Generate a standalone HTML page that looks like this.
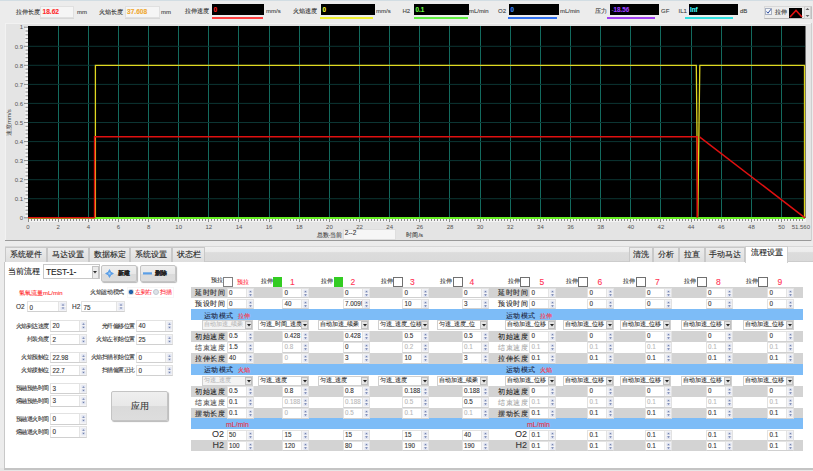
<!DOCTYPE html><html><head><meta charset="utf-8"><style>
*{margin:0;padding:0;box-sizing:border-box}
html,body{width:813px;height:471px;overflow:hidden;background:#ececec;font-family:"Liberation Sans", sans-serif;}
.a{position:absolute;white-space:nowrap}
.t{position:absolute;white-space:nowrap;font-size:7px;color:#333;line-height:1;-webkit-text-stroke:0.1px currentColor}
.bk{position:absolute;background:#000;}
.ul{position:absolute;height:2px}
.sp{position:absolute;background:#fff;border:1px solid #e2e2e2;border-bottom-color:#d0d0d0}
.sp .v{position:absolute;left:1.5px;top:1px;font-size:7px;color:#222;line-height:1;-webkit-text-stroke:0.1px currentColor}
.sp .ar{position:absolute;right:0;top:0;bottom:0;width:6px;border-left:1px solid #e4e4e4;background:#f4f4f6}
</style></head><body>

<div class="a" style="left:0;top:0;width:813px;height:1px;background:#d2dde3"></div>
<div class="t" style="left:16px;top:9px;font-size:6px;color:#333;">拉伸长度</div>
<div class="a" style="left:39.5px;top:6.3px;width:34.5px;height:11.7px;background:#f5f5f5;border:1px solid #e0e0e0;box-shadow:0 1px 0 #d8d8d8"></div>
<div class="t" style="left:42.5px;top:9.3px;font-size:6.6px;color:#ff2a2a;font-weight:bold">18.62</div>
<div class="t" style="left:77px;top:8.5px;font-size:6px;color:#444;">mm</div>
<div class="t" style="left:98.5px;top:9px;font-size:6px;color:#333;">火焰长度</div>
<div class="a" style="left:124.5px;top:6.3px;width:35px;height:11.7px;background:#f5f5f5;border:1px solid #e0e0e0;box-shadow:0 1px 0 #d8d8d8"></div>
<div class="t" style="left:127px;top:9.3px;font-size:6.6px;color:#f0a830;font-weight:bold">37.608</div>
<div class="t" style="left:161px;top:8.5px;font-size:6px;color:#444;">mm</div>
<div class="t" style="left:185px;top:8px;font-size:6px;color:#333;">拉伸速度</div>
<div class="bk" style="left:212px;top:4px;width:52px;height:11px"></div>
<div class="t" style="left:213.5px;top:6.6px;font-size:6.3px;color:#ff2020;font-weight:bold">0</div>
<div class="ul" style="left:212px;top:16.6px;width:51px;background:#ff4040"></div>
<div class="t" style="left:266px;top:8px;font-size:6px;color:#444;">mm/s</div>
<div class="t" style="left:293px;top:8px;font-size:6px;color:#333;">火焰速度</div>
<div class="bk" style="left:321px;top:4px;width:54px;height:11px"></div>
<div class="t" style="left:322.5px;top:6.6px;font-size:6.3px;color:#ffff30;font-weight:bold">0</div>
<div class="ul" style="left:320px;top:16.6px;width:53px;background:#f0f030"></div>
<div class="t" style="left:376px;top:8px;font-size:6px;color:#444;">mm/s</div>
<div class="t" style="left:402.5px;top:8px;font-size:6px;color:#444;">H2</div>
<div class="bk" style="left:414px;top:4px;width:55px;height:11px"></div>
<div class="t" style="left:415.5px;top:6.6px;font-size:6.3px;color:#70ff40;font-weight:bold">0.1</div>
<div class="ul" style="left:414px;top:16.6px;width:54px;background:#60f040"></div>
<div class="t" style="left:469px;top:8.3px;font-size:6px;color:#444;">mL/min</div>
<div class="t" style="left:498px;top:8px;font-size:6px;color:#444;">O2</div>
<div class="bk" style="left:509px;top:4px;width:50px;height:11px"></div>
<div class="t" style="left:510.5px;top:6.6px;font-size:6.3px;color:#3a8cff;font-weight:bold">0</div>
<div class="ul" style="left:507.5px;top:16.6px;width:49px;background:#3070f0"></div>
<div class="t" style="left:560px;top:8.3px;font-size:6px;color:#444;">mL/min</div>
<div class="t" style="left:594.5px;top:8px;font-size:6px;color:#444;">压力</div>
<div class="bk" style="left:610px;top:4px;width:49px;height:11px"></div>
<div class="t" style="left:611.5px;top:6.6px;font-size:6.3px;color:#a040ff;font-weight:bold"><span style="font-weight:normal;color:#8060a0">-</span>18.56</div>
<div class="ul" style="left:606.5px;top:16.6px;width:48px;background:#a040f0"></div>
<div class="t" style="left:661px;top:8.3px;font-size:6px;color:#444;">GF</div>
<div class="t" style="left:678.5px;top:8px;font-size:6px;color:#444;">IL1</div>
<div class="bk" style="left:688.5px;top:4px;width:49.5px;height:11px"></div>
<div class="t" style="left:690.0px;top:6.6px;font-size:6.3px;color:#40ffff;font-weight:bold">Inf</div>
<div class="ul" style="left:684.5px;top:16.6px;width:48.5px;background:#30e0e0"></div>
<div class="t" style="left:740px;top:8.3px;font-size:6px;color:#444;">dB</div>
<div class="a" style="left:763.5px;top:5.5px;width:48px;height:13.5px;background:#ececec;border:1px solid #d8d8d8;border-bottom-color:#b8b8b8;border-right-color:#c0c0c0"></div>
<div class="a" style="left:765px;top:8px;width:6.5px;height:6.5px;background:#f4f6fa;border:1px solid #a8b0c0"></div>
<svg class="a" style="left:765px;top:8px" width="7" height="7"><polyline points="1.5,3.5 3,5.2 6,1.2" fill="none" stroke="#3050a0" stroke-width="1"/></svg>
<div class="t" style="left:774.5px;top:8.5px;font-size:6px;color:#333;">拉伸</div>
<div class="a" style="left:788.6px;top:7.5px;width:13.4px;height:10px;background:#000"></div>
<svg class="a" style="left:788.6px;top:7.5px" width="14" height="10"><polyline points="1,9 7,2.5 13,9" fill="none" stroke="#e01010" stroke-width="1.6"/></svg>
<div class="a" style="left:804px;top:6px;width:7px;height:12.5px;background:#e8e8e8;border:1px solid #d0d0d0"></div>
<svg class="a" style="left:805px;top:7px" width="5" height="11"><polygon points="0.5,3 4.5,3 2.5,1" fill="#666"/><polygon points="0.5,8 4.5,8 2.5,10" fill="#666"/></svg>
<svg class="a" style="left:0;top:0" width="813" height="245"><rect x="5.5" y="23.5" width="806" height="217" fill="#e4e4e4" stroke="#f2f2f2"/><rect x="25" y="26" width="3" height="192" fill="#f2f2f2"/><rect x="28" y="219" width="778" height="3" fill="#f2f2f2"/><line x1="5" y1="240.5" x2="812" y2="240.5" stroke="#9a9a9a"/><line x1="811.5" y1="23" x2="811.5" y2="241" stroke="#cfcfcf"/><rect x="28" y="26" width="777.5" height="192" fill="#000"/><line x1="58.5" y1="26" x2="58.5" y2="217.8" stroke="#136a5e" stroke-width="1"/><line x1="88.5" y1="26" x2="88.5" y2="217.8" stroke="#136a5e" stroke-width="1"/><line x1="118.5" y1="26" x2="118.5" y2="217.8" stroke="#136a5e" stroke-width="1"/><line x1="148.5" y1="26" x2="148.5" y2="217.8" stroke="#136a5e" stroke-width="1"/><line x1="178.5" y1="26" x2="178.5" y2="217.8" stroke="#136a5e" stroke-width="1"/><line x1="208.5" y1="26" x2="208.5" y2="217.8" stroke="#136a5e" stroke-width="1"/><line x1="238.5" y1="26" x2="238.5" y2="217.8" stroke="#136a5e" stroke-width="1"/><line x1="269.5" y1="26" x2="269.5" y2="217.8" stroke="#136a5e" stroke-width="1"/><line x1="299.5" y1="26" x2="299.5" y2="217.8" stroke="#136a5e" stroke-width="1"/><line x1="329.5" y1="26" x2="329.5" y2="217.8" stroke="#136a5e" stroke-width="1"/><line x1="359.5" y1="26" x2="359.5" y2="217.8" stroke="#136a5e" stroke-width="1"/><line x1="389.5" y1="26" x2="389.5" y2="217.8" stroke="#136a5e" stroke-width="1"/><line x1="419.5" y1="26" x2="419.5" y2="217.8" stroke="#136a5e" stroke-width="1"/><line x1="449.5" y1="26" x2="449.5" y2="217.8" stroke="#136a5e" stroke-width="1"/><line x1="480.5" y1="26" x2="480.5" y2="217.8" stroke="#136a5e" stroke-width="1"/><line x1="510.5" y1="26" x2="510.5" y2="217.8" stroke="#136a5e" stroke-width="1"/><line x1="540.5" y1="26" x2="540.5" y2="217.8" stroke="#136a5e" stroke-width="1"/><line x1="570.5" y1="26" x2="570.5" y2="217.8" stroke="#136a5e" stroke-width="1"/><line x1="600.5" y1="26" x2="600.5" y2="217.8" stroke="#136a5e" stroke-width="1"/><line x1="630.5" y1="26" x2="630.5" y2="217.8" stroke="#136a5e" stroke-width="1"/><line x1="660.5" y1="26" x2="660.5" y2="217.8" stroke="#136a5e" stroke-width="1"/><line x1="691.5" y1="26" x2="691.5" y2="217.8" stroke="#136a5e" stroke-width="1"/><line x1="721.5" y1="26" x2="721.5" y2="217.8" stroke="#136a5e" stroke-width="1"/><line x1="751.5" y1="26" x2="751.5" y2="217.8" stroke="#136a5e" stroke-width="1"/><line x1="781.5" y1="26" x2="781.5" y2="217.8" stroke="#136a5e" stroke-width="1"/><line x1="28" y1="198.7" x2="805.0" y2="198.7" stroke="#0c3533" stroke-width="1"/><line x1="28" y1="179.7" x2="805.0" y2="179.7" stroke="#0c3533" stroke-width="1"/><line x1="28" y1="160.6" x2="805.0" y2="160.6" stroke="#0c3533" stroke-width="1"/><line x1="28" y1="141.6" x2="805.0" y2="141.6" stroke="#0c3533" stroke-width="1"/><line x1="28" y1="122.5" x2="805.0" y2="122.5" stroke="#0c3533" stroke-width="1"/><line x1="28" y1="103.4" x2="805.0" y2="103.4" stroke="#0c3533" stroke-width="1"/><line x1="28" y1="84.4" x2="805.0" y2="84.4" stroke="#0c3533" stroke-width="1"/><line x1="28" y1="65.3" x2="805.0" y2="65.3" stroke="#0c3533" stroke-width="1"/><line x1="28" y1="46.3" x2="805.0" y2="46.3" stroke="#0c3533" stroke-width="1"/><line x1="28" y1="218" x2="805.0" y2="218" stroke="#66ee22" stroke-width="2"/><line x1="28" y1="217.7" x2="94.6" y2="217.7" stroke="#e01010" stroke-width="1.6"/><polyline points="95.4,217.8 95.4,65.3 696.3,65.3 697.8,216.8 699.8,65.3 804.5,65.3 804.5,217.8" fill="none" stroke="#e0d820" stroke-width="1.3"/><polyline points="94.6,217.8 94.6,136.8 697.2,136.8 697.2,217.8" fill="none" stroke="#e01010" stroke-width="1.5"/><line x1="699.5" y1="136.8" x2="805.0" y2="217.8" stroke="#e01010" stroke-width="1.5"/><line x1="28.5" y1="219" x2="28.5" y2="222" stroke="#888" stroke-width="1"/><line x1="31.5" y1="219" x2="31.5" y2="221" stroke="#888" stroke-width="1"/><line x1="34.5" y1="219" x2="34.5" y2="221" stroke="#888" stroke-width="1"/><line x1="37.5" y1="219" x2="37.5" y2="221" stroke="#888" stroke-width="1"/><line x1="40.5" y1="219" x2="40.5" y2="221" stroke="#888" stroke-width="1"/><line x1="43.5" y1="219" x2="43.5" y2="221" stroke="#888" stroke-width="1"/><line x1="46.5" y1="219" x2="46.5" y2="221" stroke="#888" stroke-width="1"/><line x1="49.5" y1="219" x2="49.5" y2="221" stroke="#888" stroke-width="1"/><line x1="52.5" y1="219" x2="52.5" y2="221" stroke="#888" stroke-width="1"/><line x1="55.5" y1="219" x2="55.5" y2="221" stroke="#888" stroke-width="1"/><line x1="58.5" y1="219" x2="58.5" y2="222" stroke="#888" stroke-width="1"/><line x1="61.5" y1="219" x2="61.5" y2="221" stroke="#888" stroke-width="1"/><line x1="64.5" y1="219" x2="64.5" y2="221" stroke="#888" stroke-width="1"/><line x1="67.5" y1="219" x2="67.5" y2="221" stroke="#888" stroke-width="1"/><line x1="70.5" y1="219" x2="70.5" y2="221" stroke="#888" stroke-width="1"/><line x1="73.5" y1="219" x2="73.5" y2="221" stroke="#888" stroke-width="1"/><line x1="76.5" y1="219" x2="76.5" y2="221" stroke="#888" stroke-width="1"/><line x1="79.5" y1="219" x2="79.5" y2="221" stroke="#888" stroke-width="1"/><line x1="82.5" y1="219" x2="82.5" y2="221" stroke="#888" stroke-width="1"/><line x1="85.5" y1="219" x2="85.5" y2="221" stroke="#888" stroke-width="1"/><line x1="88.5" y1="219" x2="88.5" y2="222" stroke="#888" stroke-width="1"/><line x1="91.5" y1="219" x2="91.5" y2="221" stroke="#888" stroke-width="1"/><line x1="94.5" y1="219" x2="94.5" y2="221" stroke="#888" stroke-width="1"/><line x1="97.5" y1="219" x2="97.5" y2="221" stroke="#888" stroke-width="1"/><line x1="100.5" y1="219" x2="100.5" y2="221" stroke="#888" stroke-width="1"/><line x1="103.5" y1="219" x2="103.5" y2="221" stroke="#888" stroke-width="1"/><line x1="106.5" y1="219" x2="106.5" y2="221" stroke="#888" stroke-width="1"/><line x1="109.5" y1="219" x2="109.5" y2="221" stroke="#888" stroke-width="1"/><line x1="112.5" y1="219" x2="112.5" y2="221" stroke="#888" stroke-width="1"/><line x1="115.5" y1="219" x2="115.5" y2="221" stroke="#888" stroke-width="1"/><line x1="118.5" y1="219" x2="118.5" y2="222" stroke="#888" stroke-width="1"/><line x1="121.5" y1="219" x2="121.5" y2="221" stroke="#888" stroke-width="1"/><line x1="124.5" y1="219" x2="124.5" y2="221" stroke="#888" stroke-width="1"/><line x1="127.5" y1="219" x2="127.5" y2="221" stroke="#888" stroke-width="1"/><line x1="130.5" y1="219" x2="130.5" y2="221" stroke="#888" stroke-width="1"/><line x1="133.5" y1="219" x2="133.5" y2="221" stroke="#888" stroke-width="1"/><line x1="136.5" y1="219" x2="136.5" y2="221" stroke="#888" stroke-width="1"/><line x1="139.5" y1="219" x2="139.5" y2="221" stroke="#888" stroke-width="1"/><line x1="142.5" y1="219" x2="142.5" y2="221" stroke="#888" stroke-width="1"/><line x1="145.5" y1="219" x2="145.5" y2="221" stroke="#888" stroke-width="1"/><line x1="148.5" y1="219" x2="148.5" y2="222" stroke="#888" stroke-width="1"/><line x1="151.5" y1="219" x2="151.5" y2="221" stroke="#888" stroke-width="1"/><line x1="154.5" y1="219" x2="154.5" y2="221" stroke="#888" stroke-width="1"/><line x1="157.5" y1="219" x2="157.5" y2="221" stroke="#888" stroke-width="1"/><line x1="160.5" y1="219" x2="160.5" y2="221" stroke="#888" stroke-width="1"/><line x1="163.5" y1="219" x2="163.5" y2="221" stroke="#888" stroke-width="1"/><line x1="166.5" y1="219" x2="166.5" y2="221" stroke="#888" stroke-width="1"/><line x1="169.5" y1="219" x2="169.5" y2="221" stroke="#888" stroke-width="1"/><line x1="172.5" y1="219" x2="172.5" y2="221" stroke="#888" stroke-width="1"/><line x1="175.5" y1="219" x2="175.5" y2="221" stroke="#888" stroke-width="1"/><line x1="178.5" y1="219" x2="178.5" y2="222" stroke="#888" stroke-width="1"/><line x1="181.5" y1="219" x2="181.5" y2="221" stroke="#888" stroke-width="1"/><line x1="184.5" y1="219" x2="184.5" y2="221" stroke="#888" stroke-width="1"/><line x1="187.5" y1="219" x2="187.5" y2="221" stroke="#888" stroke-width="1"/><line x1="190.5" y1="219" x2="190.5" y2="221" stroke="#888" stroke-width="1"/><line x1="193.5" y1="219" x2="193.5" y2="221" stroke="#888" stroke-width="1"/><line x1="196.5" y1="219" x2="196.5" y2="221" stroke="#888" stroke-width="1"/><line x1="199.5" y1="219" x2="199.5" y2="221" stroke="#888" stroke-width="1"/><line x1="202.5" y1="219" x2="202.5" y2="221" stroke="#888" stroke-width="1"/><line x1="205.5" y1="219" x2="205.5" y2="221" stroke="#888" stroke-width="1"/><line x1="208.5" y1="219" x2="208.5" y2="222" stroke="#888" stroke-width="1"/><line x1="211.5" y1="219" x2="211.5" y2="221" stroke="#888" stroke-width="1"/><line x1="214.5" y1="219" x2="214.5" y2="221" stroke="#888" stroke-width="1"/><line x1="217.5" y1="219" x2="217.5" y2="221" stroke="#888" stroke-width="1"/><line x1="220.5" y1="219" x2="220.5" y2="221" stroke="#888" stroke-width="1"/><line x1="223.5" y1="219" x2="223.5" y2="221" stroke="#888" stroke-width="1"/><line x1="226.5" y1="219" x2="226.5" y2="221" stroke="#888" stroke-width="1"/><line x1="229.5" y1="219" x2="229.5" y2="221" stroke="#888" stroke-width="1"/><line x1="232.5" y1="219" x2="232.5" y2="221" stroke="#888" stroke-width="1"/><line x1="235.5" y1="219" x2="235.5" y2="221" stroke="#888" stroke-width="1"/><line x1="238.5" y1="219" x2="238.5" y2="222" stroke="#888" stroke-width="1"/><line x1="241.5" y1="219" x2="241.5" y2="221" stroke="#888" stroke-width="1"/><line x1="245.5" y1="219" x2="245.5" y2="221" stroke="#888" stroke-width="1"/><line x1="248.5" y1="219" x2="248.5" y2="221" stroke="#888" stroke-width="1"/><line x1="251.5" y1="219" x2="251.5" y2="221" stroke="#888" stroke-width="1"/><line x1="254.5" y1="219" x2="254.5" y2="221" stroke="#888" stroke-width="1"/><line x1="257.5" y1="219" x2="257.5" y2="221" stroke="#888" stroke-width="1"/><line x1="260.5" y1="219" x2="260.5" y2="221" stroke="#888" stroke-width="1"/><line x1="263.5" y1="219" x2="263.5" y2="221" stroke="#888" stroke-width="1"/><line x1="266.5" y1="219" x2="266.5" y2="221" stroke="#888" stroke-width="1"/><line x1="269.5" y1="219" x2="269.5" y2="222" stroke="#888" stroke-width="1"/><line x1="272.5" y1="219" x2="272.5" y2="221" stroke="#888" stroke-width="1"/><line x1="275.5" y1="219" x2="275.5" y2="221" stroke="#888" stroke-width="1"/><line x1="278.5" y1="219" x2="278.5" y2="221" stroke="#888" stroke-width="1"/><line x1="281.5" y1="219" x2="281.5" y2="221" stroke="#888" stroke-width="1"/><line x1="284.5" y1="219" x2="284.5" y2="221" stroke="#888" stroke-width="1"/><line x1="287.5" y1="219" x2="287.5" y2="221" stroke="#888" stroke-width="1"/><line x1="290.5" y1="219" x2="290.5" y2="221" stroke="#888" stroke-width="1"/><line x1="293.5" y1="219" x2="293.5" y2="221" stroke="#888" stroke-width="1"/><line x1="296.5" y1="219" x2="296.5" y2="221" stroke="#888" stroke-width="1"/><line x1="299.5" y1="219" x2="299.5" y2="222" stroke="#888" stroke-width="1"/><line x1="302.5" y1="219" x2="302.5" y2="221" stroke="#888" stroke-width="1"/><line x1="305.5" y1="219" x2="305.5" y2="221" stroke="#888" stroke-width="1"/><line x1="308.5" y1="219" x2="308.5" y2="221" stroke="#888" stroke-width="1"/><line x1="311.5" y1="219" x2="311.5" y2="221" stroke="#888" stroke-width="1"/><line x1="314.5" y1="219" x2="314.5" y2="221" stroke="#888" stroke-width="1"/><line x1="317.5" y1="219" x2="317.5" y2="221" stroke="#888" stroke-width="1"/><line x1="320.5" y1="219" x2="320.5" y2="221" stroke="#888" stroke-width="1"/><line x1="323.5" y1="219" x2="323.5" y2="221" stroke="#888" stroke-width="1"/><line x1="326.5" y1="219" x2="326.5" y2="221" stroke="#888" stroke-width="1"/><line x1="329.5" y1="219" x2="329.5" y2="222" stroke="#888" stroke-width="1"/><line x1="332.5" y1="219" x2="332.5" y2="221" stroke="#888" stroke-width="1"/><line x1="335.5" y1="219" x2="335.5" y2="221" stroke="#888" stroke-width="1"/><line x1="338.5" y1="219" x2="338.5" y2="221" stroke="#888" stroke-width="1"/><line x1="341.5" y1="219" x2="341.5" y2="221" stroke="#888" stroke-width="1"/><line x1="344.5" y1="219" x2="344.5" y2="221" stroke="#888" stroke-width="1"/><line x1="347.5" y1="219" x2="347.5" y2="221" stroke="#888" stroke-width="1"/><line x1="350.5" y1="219" x2="350.5" y2="221" stroke="#888" stroke-width="1"/><line x1="353.5" y1="219" x2="353.5" y2="221" stroke="#888" stroke-width="1"/><line x1="356.5" y1="219" x2="356.5" y2="221" stroke="#888" stroke-width="1"/><line x1="359.5" y1="219" x2="359.5" y2="222" stroke="#888" stroke-width="1"/><line x1="362.5" y1="219" x2="362.5" y2="221" stroke="#888" stroke-width="1"/><line x1="365.5" y1="219" x2="365.5" y2="221" stroke="#888" stroke-width="1"/><line x1="368.5" y1="219" x2="368.5" y2="221" stroke="#888" stroke-width="1"/><line x1="371.5" y1="219" x2="371.5" y2="221" stroke="#888" stroke-width="1"/><line x1="374.5" y1="219" x2="374.5" y2="221" stroke="#888" stroke-width="1"/><line x1="377.5" y1="219" x2="377.5" y2="221" stroke="#888" stroke-width="1"/><line x1="380.5" y1="219" x2="380.5" y2="221" stroke="#888" stroke-width="1"/><line x1="383.5" y1="219" x2="383.5" y2="221" stroke="#888" stroke-width="1"/><line x1="386.5" y1="219" x2="386.5" y2="221" stroke="#888" stroke-width="1"/><line x1="389.5" y1="219" x2="389.5" y2="222" stroke="#888" stroke-width="1"/><line x1="392.5" y1="219" x2="392.5" y2="221" stroke="#888" stroke-width="1"/><line x1="395.5" y1="219" x2="395.5" y2="221" stroke="#888" stroke-width="1"/><line x1="398.5" y1="219" x2="398.5" y2="221" stroke="#888" stroke-width="1"/><line x1="401.5" y1="219" x2="401.5" y2="221" stroke="#888" stroke-width="1"/><line x1="404.5" y1="219" x2="404.5" y2="221" stroke="#888" stroke-width="1"/><line x1="407.5" y1="219" x2="407.5" y2="221" stroke="#888" stroke-width="1"/><line x1="410.5" y1="219" x2="410.5" y2="221" stroke="#888" stroke-width="1"/><line x1="413.5" y1="219" x2="413.5" y2="221" stroke="#888" stroke-width="1"/><line x1="416.5" y1="219" x2="416.5" y2="221" stroke="#888" stroke-width="1"/><line x1="419.5" y1="219" x2="419.5" y2="222" stroke="#888" stroke-width="1"/><line x1="422.5" y1="219" x2="422.5" y2="221" stroke="#888" stroke-width="1"/><line x1="425.5" y1="219" x2="425.5" y2="221" stroke="#888" stroke-width="1"/><line x1="428.5" y1="219" x2="428.5" y2="221" stroke="#888" stroke-width="1"/><line x1="431.5" y1="219" x2="431.5" y2="221" stroke="#888" stroke-width="1"/><line x1="434.5" y1="219" x2="434.5" y2="221" stroke="#888" stroke-width="1"/><line x1="437.5" y1="219" x2="437.5" y2="221" stroke="#888" stroke-width="1"/><line x1="440.5" y1="219" x2="440.5" y2="221" stroke="#888" stroke-width="1"/><line x1="443.5" y1="219" x2="443.5" y2="221" stroke="#888" stroke-width="1"/><line x1="446.5" y1="219" x2="446.5" y2="221" stroke="#888" stroke-width="1"/><line x1="449.5" y1="219" x2="449.5" y2="222" stroke="#888" stroke-width="1"/><line x1="452.5" y1="219" x2="452.5" y2="221" stroke="#888" stroke-width="1"/><line x1="455.5" y1="219" x2="455.5" y2="221" stroke="#888" stroke-width="1"/><line x1="458.5" y1="219" x2="458.5" y2="221" stroke="#888" stroke-width="1"/><line x1="462.5" y1="219" x2="462.5" y2="221" stroke="#888" stroke-width="1"/><line x1="465.5" y1="219" x2="465.5" y2="221" stroke="#888" stroke-width="1"/><line x1="468.5" y1="219" x2="468.5" y2="221" stroke="#888" stroke-width="1"/><line x1="471.5" y1="219" x2="471.5" y2="221" stroke="#888" stroke-width="1"/><line x1="474.5" y1="219" x2="474.5" y2="221" stroke="#888" stroke-width="1"/><line x1="477.5" y1="219" x2="477.5" y2="221" stroke="#888" stroke-width="1"/><line x1="480.5" y1="219" x2="480.5" y2="222" stroke="#888" stroke-width="1"/><line x1="483.5" y1="219" x2="483.5" y2="221" stroke="#888" stroke-width="1"/><line x1="486.5" y1="219" x2="486.5" y2="221" stroke="#888" stroke-width="1"/><line x1="489.5" y1="219" x2="489.5" y2="221" stroke="#888" stroke-width="1"/><line x1="492.5" y1="219" x2="492.5" y2="221" stroke="#888" stroke-width="1"/><line x1="495.5" y1="219" x2="495.5" y2="221" stroke="#888" stroke-width="1"/><line x1="498.5" y1="219" x2="498.5" y2="221" stroke="#888" stroke-width="1"/><line x1="501.5" y1="219" x2="501.5" y2="221" stroke="#888" stroke-width="1"/><line x1="504.5" y1="219" x2="504.5" y2="221" stroke="#888" stroke-width="1"/><line x1="507.5" y1="219" x2="507.5" y2="221" stroke="#888" stroke-width="1"/><line x1="510.5" y1="219" x2="510.5" y2="222" stroke="#888" stroke-width="1"/><line x1="513.5" y1="219" x2="513.5" y2="221" stroke="#888" stroke-width="1"/><line x1="516.5" y1="219" x2="516.5" y2="221" stroke="#888" stroke-width="1"/><line x1="519.5" y1="219" x2="519.5" y2="221" stroke="#888" stroke-width="1"/><line x1="522.5" y1="219" x2="522.5" y2="221" stroke="#888" stroke-width="1"/><line x1="525.5" y1="219" x2="525.5" y2="221" stroke="#888" stroke-width="1"/><line x1="528.5" y1="219" x2="528.5" y2="221" stroke="#888" stroke-width="1"/><line x1="531.5" y1="219" x2="531.5" y2="221" stroke="#888" stroke-width="1"/><line x1="534.5" y1="219" x2="534.5" y2="221" stroke="#888" stroke-width="1"/><line x1="537.5" y1="219" x2="537.5" y2="221" stroke="#888" stroke-width="1"/><line x1="540.5" y1="219" x2="540.5" y2="222" stroke="#888" stroke-width="1"/><line x1="543.5" y1="219" x2="543.5" y2="221" stroke="#888" stroke-width="1"/><line x1="546.5" y1="219" x2="546.5" y2="221" stroke="#888" stroke-width="1"/><line x1="549.5" y1="219" x2="549.5" y2="221" stroke="#888" stroke-width="1"/><line x1="552.5" y1="219" x2="552.5" y2="221" stroke="#888" stroke-width="1"/><line x1="555.5" y1="219" x2="555.5" y2="221" stroke="#888" stroke-width="1"/><line x1="558.5" y1="219" x2="558.5" y2="221" stroke="#888" stroke-width="1"/><line x1="561.5" y1="219" x2="561.5" y2="221" stroke="#888" stroke-width="1"/><line x1="564.5" y1="219" x2="564.5" y2="221" stroke="#888" stroke-width="1"/><line x1="567.5" y1="219" x2="567.5" y2="221" stroke="#888" stroke-width="1"/><line x1="570.5" y1="219" x2="570.5" y2="222" stroke="#888" stroke-width="1"/><line x1="573.5" y1="219" x2="573.5" y2="221" stroke="#888" stroke-width="1"/><line x1="576.5" y1="219" x2="576.5" y2="221" stroke="#888" stroke-width="1"/><line x1="579.5" y1="219" x2="579.5" y2="221" stroke="#888" stroke-width="1"/><line x1="582.5" y1="219" x2="582.5" y2="221" stroke="#888" stroke-width="1"/><line x1="585.5" y1="219" x2="585.5" y2="221" stroke="#888" stroke-width="1"/><line x1="588.5" y1="219" x2="588.5" y2="221" stroke="#888" stroke-width="1"/><line x1="591.5" y1="219" x2="591.5" y2="221" stroke="#888" stroke-width="1"/><line x1="594.5" y1="219" x2="594.5" y2="221" stroke="#888" stroke-width="1"/><line x1="597.5" y1="219" x2="597.5" y2="221" stroke="#888" stroke-width="1"/><line x1="600.5" y1="219" x2="600.5" y2="222" stroke="#888" stroke-width="1"/><line x1="603.5" y1="219" x2="603.5" y2="221" stroke="#888" stroke-width="1"/><line x1="606.5" y1="219" x2="606.5" y2="221" stroke="#888" stroke-width="1"/><line x1="609.5" y1="219" x2="609.5" y2="221" stroke="#888" stroke-width="1"/><line x1="612.5" y1="219" x2="612.5" y2="221" stroke="#888" stroke-width="1"/><line x1="615.5" y1="219" x2="615.5" y2="221" stroke="#888" stroke-width="1"/><line x1="618.5" y1="219" x2="618.5" y2="221" stroke="#888" stroke-width="1"/><line x1="621.5" y1="219" x2="621.5" y2="221" stroke="#888" stroke-width="1"/><line x1="624.5" y1="219" x2="624.5" y2="221" stroke="#888" stroke-width="1"/><line x1="627.5" y1="219" x2="627.5" y2="221" stroke="#888" stroke-width="1"/><line x1="630.5" y1="219" x2="630.5" y2="222" stroke="#888" stroke-width="1"/><line x1="633.5" y1="219" x2="633.5" y2="221" stroke="#888" stroke-width="1"/><line x1="636.5" y1="219" x2="636.5" y2="221" stroke="#888" stroke-width="1"/><line x1="639.5" y1="219" x2="639.5" y2="221" stroke="#888" stroke-width="1"/><line x1="642.5" y1="219" x2="642.5" y2="221" stroke="#888" stroke-width="1"/><line x1="645.5" y1="219" x2="645.5" y2="221" stroke="#888" stroke-width="1"/><line x1="648.5" y1="219" x2="648.5" y2="221" stroke="#888" stroke-width="1"/><line x1="651.5" y1="219" x2="651.5" y2="221" stroke="#888" stroke-width="1"/><line x1="654.5" y1="219" x2="654.5" y2="221" stroke="#888" stroke-width="1"/><line x1="657.5" y1="219" x2="657.5" y2="221" stroke="#888" stroke-width="1"/><line x1="660.5" y1="219" x2="660.5" y2="222" stroke="#888" stroke-width="1"/><line x1="663.5" y1="219" x2="663.5" y2="221" stroke="#888" stroke-width="1"/><line x1="666.5" y1="219" x2="666.5" y2="221" stroke="#888" stroke-width="1"/><line x1="669.5" y1="219" x2="669.5" y2="221" stroke="#888" stroke-width="1"/><line x1="672.5" y1="219" x2="672.5" y2="221" stroke="#888" stroke-width="1"/><line x1="676.5" y1="219" x2="676.5" y2="221" stroke="#888" stroke-width="1"/><line x1="679.5" y1="219" x2="679.5" y2="221" stroke="#888" stroke-width="1"/><line x1="682.5" y1="219" x2="682.5" y2="221" stroke="#888" stroke-width="1"/><line x1="685.5" y1="219" x2="685.5" y2="221" stroke="#888" stroke-width="1"/><line x1="688.5" y1="219" x2="688.5" y2="221" stroke="#888" stroke-width="1"/><line x1="691.5" y1="219" x2="691.5" y2="222" stroke="#888" stroke-width="1"/><line x1="694.5" y1="219" x2="694.5" y2="221" stroke="#888" stroke-width="1"/><line x1="697.5" y1="219" x2="697.5" y2="221" stroke="#888" stroke-width="1"/><line x1="700.5" y1="219" x2="700.5" y2="221" stroke="#888" stroke-width="1"/><line x1="703.5" y1="219" x2="703.5" y2="221" stroke="#888" stroke-width="1"/><line x1="706.5" y1="219" x2="706.5" y2="221" stroke="#888" stroke-width="1"/><line x1="709.5" y1="219" x2="709.5" y2="221" stroke="#888" stroke-width="1"/><line x1="712.5" y1="219" x2="712.5" y2="221" stroke="#888" stroke-width="1"/><line x1="715.5" y1="219" x2="715.5" y2="221" stroke="#888" stroke-width="1"/><line x1="718.5" y1="219" x2="718.5" y2="221" stroke="#888" stroke-width="1"/><line x1="721.5" y1="219" x2="721.5" y2="222" stroke="#888" stroke-width="1"/><line x1="724.5" y1="219" x2="724.5" y2="221" stroke="#888" stroke-width="1"/><line x1="727.5" y1="219" x2="727.5" y2="221" stroke="#888" stroke-width="1"/><line x1="730.5" y1="219" x2="730.5" y2="221" stroke="#888" stroke-width="1"/><line x1="733.5" y1="219" x2="733.5" y2="221" stroke="#888" stroke-width="1"/><line x1="736.5" y1="219" x2="736.5" y2="221" stroke="#888" stroke-width="1"/><line x1="739.5" y1="219" x2="739.5" y2="221" stroke="#888" stroke-width="1"/><line x1="742.5" y1="219" x2="742.5" y2="221" stroke="#888" stroke-width="1"/><line x1="745.5" y1="219" x2="745.5" y2="221" stroke="#888" stroke-width="1"/><line x1="748.5" y1="219" x2="748.5" y2="221" stroke="#888" stroke-width="1"/><line x1="751.5" y1="219" x2="751.5" y2="222" stroke="#888" stroke-width="1"/><line x1="754.5" y1="219" x2="754.5" y2="221" stroke="#888" stroke-width="1"/><line x1="757.5" y1="219" x2="757.5" y2="221" stroke="#888" stroke-width="1"/><line x1="760.5" y1="219" x2="760.5" y2="221" stroke="#888" stroke-width="1"/><line x1="763.5" y1="219" x2="763.5" y2="221" stroke="#888" stroke-width="1"/><line x1="766.5" y1="219" x2="766.5" y2="221" stroke="#888" stroke-width="1"/><line x1="769.5" y1="219" x2="769.5" y2="221" stroke="#888" stroke-width="1"/><line x1="772.5" y1="219" x2="772.5" y2="221" stroke="#888" stroke-width="1"/><line x1="775.5" y1="219" x2="775.5" y2="221" stroke="#888" stroke-width="1"/><line x1="778.5" y1="219" x2="778.5" y2="221" stroke="#888" stroke-width="1"/><line x1="781.5" y1="219" x2="781.5" y2="222" stroke="#888" stroke-width="1"/><line x1="784.5" y1="219" x2="784.5" y2="221" stroke="#888" stroke-width="1"/><line x1="787.5" y1="219" x2="787.5" y2="221" stroke="#888" stroke-width="1"/><line x1="790.5" y1="219" x2="790.5" y2="221" stroke="#888" stroke-width="1"/><line x1="793.5" y1="219" x2="793.5" y2="221" stroke="#888" stroke-width="1"/><line x1="796.5" y1="219" x2="796.5" y2="221" stroke="#888" stroke-width="1"/><line x1="799.5" y1="219" x2="799.5" y2="221" stroke="#888" stroke-width="1"/><line x1="802.5" y1="219" x2="802.5" y2="221" stroke="#888" stroke-width="1"/><line x1="24" y1="217.8" x2="28" y2="217.8" stroke="#888" stroke-width="1"/><line x1="25.5" y1="214.0" x2="28" y2="214.0" stroke="#888" stroke-width="1"/><line x1="25.5" y1="210.2" x2="28" y2="210.2" stroke="#888" stroke-width="1"/><line x1="25.5" y1="206.4" x2="28" y2="206.4" stroke="#888" stroke-width="1"/><line x1="25.5" y1="202.6" x2="28" y2="202.6" stroke="#888" stroke-width="1"/><line x1="24" y1="198.7" x2="28" y2="198.7" stroke="#888" stroke-width="1"/><line x1="25.5" y1="194.9" x2="28" y2="194.9" stroke="#888" stroke-width="1"/><line x1="25.5" y1="191.1" x2="28" y2="191.1" stroke="#888" stroke-width="1"/><line x1="25.5" y1="187.3" x2="28" y2="187.3" stroke="#888" stroke-width="1"/><line x1="25.5" y1="183.5" x2="28" y2="183.5" stroke="#888" stroke-width="1"/><line x1="24" y1="179.7" x2="28" y2="179.7" stroke="#888" stroke-width="1"/><line x1="25.5" y1="175.9" x2="28" y2="175.9" stroke="#888" stroke-width="1"/><line x1="25.5" y1="172.1" x2="28" y2="172.1" stroke="#888" stroke-width="1"/><line x1="25.5" y1="168.2" x2="28" y2="168.2" stroke="#888" stroke-width="1"/><line x1="25.5" y1="164.4" x2="28" y2="164.4" stroke="#888" stroke-width="1"/><line x1="24" y1="160.6" x2="28" y2="160.6" stroke="#888" stroke-width="1"/><line x1="25.5" y1="156.8" x2="28" y2="156.8" stroke="#888" stroke-width="1"/><line x1="25.5" y1="153.0" x2="28" y2="153.0" stroke="#888" stroke-width="1"/><line x1="25.5" y1="149.2" x2="28" y2="149.2" stroke="#888" stroke-width="1"/><line x1="25.5" y1="145.4" x2="28" y2="145.4" stroke="#888" stroke-width="1"/><line x1="24" y1="141.6" x2="28" y2="141.6" stroke="#888" stroke-width="1"/><line x1="25.5" y1="137.7" x2="28" y2="137.7" stroke="#888" stroke-width="1"/><line x1="25.5" y1="133.9" x2="28" y2="133.9" stroke="#888" stroke-width="1"/><line x1="25.5" y1="130.1" x2="28" y2="130.1" stroke="#888" stroke-width="1"/><line x1="25.5" y1="126.3" x2="28" y2="126.3" stroke="#888" stroke-width="1"/><line x1="24" y1="122.5" x2="28" y2="122.5" stroke="#888" stroke-width="1"/><line x1="25.5" y1="118.7" x2="28" y2="118.7" stroke="#888" stroke-width="1"/><line x1="25.5" y1="114.9" x2="28" y2="114.9" stroke="#888" stroke-width="1"/><line x1="25.5" y1="111.1" x2="28" y2="111.1" stroke="#888" stroke-width="1"/><line x1="25.5" y1="107.3" x2="28" y2="107.3" stroke="#888" stroke-width="1"/><line x1="24" y1="103.4" x2="28" y2="103.4" stroke="#888" stroke-width="1"/><line x1="25.5" y1="99.6" x2="28" y2="99.6" stroke="#888" stroke-width="1"/><line x1="25.5" y1="95.8" x2="28" y2="95.8" stroke="#888" stroke-width="1"/><line x1="25.5" y1="92.0" x2="28" y2="92.0" stroke="#888" stroke-width="1"/><line x1="25.5" y1="88.2" x2="28" y2="88.2" stroke="#888" stroke-width="1"/><line x1="24" y1="84.4" x2="28" y2="84.4" stroke="#888" stroke-width="1"/><line x1="25.5" y1="80.6" x2="28" y2="80.6" stroke="#888" stroke-width="1"/><line x1="25.5" y1="76.8" x2="28" y2="76.8" stroke="#888" stroke-width="1"/><line x1="25.5" y1="72.9" x2="28" y2="72.9" stroke="#888" stroke-width="1"/><line x1="25.5" y1="69.1" x2="28" y2="69.1" stroke="#888" stroke-width="1"/><line x1="24" y1="65.3" x2="28" y2="65.3" stroke="#888" stroke-width="1"/><line x1="25.5" y1="61.5" x2="28" y2="61.5" stroke="#888" stroke-width="1"/><line x1="25.5" y1="57.7" x2="28" y2="57.7" stroke="#888" stroke-width="1"/><line x1="25.5" y1="53.9" x2="28" y2="53.9" stroke="#888" stroke-width="1"/><line x1="25.5" y1="50.1" x2="28" y2="50.1" stroke="#888" stroke-width="1"/><line x1="24" y1="46.3" x2="28" y2="46.3" stroke="#888" stroke-width="1"/><line x1="25.5" y1="42.4" x2="28" y2="42.4" stroke="#888" stroke-width="1"/><line x1="25.5" y1="38.6" x2="28" y2="38.6" stroke="#888" stroke-width="1"/><line x1="25.5" y1="34.8" x2="28" y2="34.8" stroke="#888" stroke-width="1"/><line x1="25.5" y1="31.0" x2="28" y2="31.0" stroke="#888" stroke-width="1"/><line x1="24" y1="27.2" x2="28" y2="27.2" stroke="#888" stroke-width="1"/><text x="28.0" y="228.5" font-size="6" fill="#555" text-anchor="middle" font-family="Liberation Sans">0</text><text x="58.1" y="228.5" font-size="6" fill="#555" text-anchor="middle" font-family="Liberation Sans">2</text><text x="88.3" y="228.5" font-size="6" fill="#555" text-anchor="middle" font-family="Liberation Sans">4</text><text x="118.4" y="228.5" font-size="6" fill="#555" text-anchor="middle" font-family="Liberation Sans">6</text><text x="148.6" y="228.5" font-size="6" fill="#555" text-anchor="middle" font-family="Liberation Sans">8</text><text x="178.7" y="228.5" font-size="6" fill="#555" text-anchor="middle" font-family="Liberation Sans">10</text><text x="208.8" y="228.5" font-size="6" fill="#555" text-anchor="middle" font-family="Liberation Sans">12</text><text x="239.0" y="228.5" font-size="6" fill="#555" text-anchor="middle" font-family="Liberation Sans">14</text><text x="269.1" y="228.5" font-size="6" fill="#555" text-anchor="middle" font-family="Liberation Sans">16</text><text x="299.3" y="228.5" font-size="6" fill="#555" text-anchor="middle" font-family="Liberation Sans">18</text><text x="329.4" y="228.5" font-size="6" fill="#555" text-anchor="middle" font-family="Liberation Sans">20</text><text x="359.5" y="228.5" font-size="6" fill="#555" text-anchor="middle" font-family="Liberation Sans">22</text><text x="389.7" y="228.5" font-size="6" fill="#555" text-anchor="middle" font-family="Liberation Sans">24</text><text x="419.8" y="228.5" font-size="6" fill="#555" text-anchor="middle" font-family="Liberation Sans">26</text><text x="450.0" y="228.5" font-size="6" fill="#555" text-anchor="middle" font-family="Liberation Sans">28</text><text x="480.1" y="228.5" font-size="6" fill="#555" text-anchor="middle" font-family="Liberation Sans">30</text><text x="510.2" y="228.5" font-size="6" fill="#555" text-anchor="middle" font-family="Liberation Sans">32</text><text x="540.4" y="228.5" font-size="6" fill="#555" text-anchor="middle" font-family="Liberation Sans">34</text><text x="570.5" y="228.5" font-size="6" fill="#555" text-anchor="middle" font-family="Liberation Sans">36</text><text x="600.7" y="228.5" font-size="6" fill="#555" text-anchor="middle" font-family="Liberation Sans">38</text><text x="630.8" y="228.5" font-size="6" fill="#555" text-anchor="middle" font-family="Liberation Sans">40</text><text x="660.9" y="228.5" font-size="6" fill="#555" text-anchor="middle" font-family="Liberation Sans">42</text><text x="691.1" y="228.5" font-size="6" fill="#555" text-anchor="middle" font-family="Liberation Sans">44</text><text x="721.2" y="228.5" font-size="6" fill="#555" text-anchor="middle" font-family="Liberation Sans">46</text><text x="751.4" y="228.5" font-size="6" fill="#555" text-anchor="middle" font-family="Liberation Sans">48</text><text x="781.5" y="228.5" font-size="6" fill="#555" text-anchor="middle" font-family="Liberation Sans">50</text><text x="810" y="228.5" font-size="6" fill="#555" text-anchor="end" font-family="Liberation Sans">51.560</text><text x="23" y="220.0" font-size="6" fill="#555" text-anchor="end" font-family="Liberation Sans">0</text><text x="23" y="200.9" font-size="6" fill="#555" text-anchor="end" font-family="Liberation Sans">0.1</text><text x="23" y="181.9" font-size="6" fill="#555" text-anchor="end" font-family="Liberation Sans">0.2</text><text x="23" y="162.8" font-size="6" fill="#555" text-anchor="end" font-family="Liberation Sans">0.3</text><text x="23" y="143.8" font-size="6" fill="#555" text-anchor="end" font-family="Liberation Sans">0.4</text><text x="23" y="124.7" font-size="6" fill="#555" text-anchor="end" font-family="Liberation Sans">0.5</text><text x="23" y="105.6" font-size="6" fill="#555" text-anchor="end" font-family="Liberation Sans">0.6</text><text x="23" y="86.6" font-size="6" fill="#555" text-anchor="end" font-family="Liberation Sans">0.7</text><text x="23" y="67.5" font-size="6" fill="#555" text-anchor="end" font-family="Liberation Sans">0.8</text><text x="23" y="48.5" font-size="6" fill="#555" text-anchor="end" font-family="Liberation Sans">0.9</text><text x="23" y="29.4" font-size="6" fill="#555" text-anchor="end" font-family="Liberation Sans">1</text><text transform="translate(11,136) rotate(-90)" font-size="6" fill="#444" font-family="Liberation Sans">速度mm/s</text></svg>
<div class="t" style="left:316.5px;top:232px;font-size:6px;color:#444;">总数-当前</div>
<div class="a" style="left:343.2px;top:228.8px;width:52.8px;height:11.2px;background:#f6f6f6;border:1px solid #dedede"></div>
<div class="t" style="left:344.8px;top:229.8px;font-size:6.5px;color:#333;">2--2</div>
<div class="t" style="left:406.4px;top:232.3px;font-size:6px;color:#444;">时间/s</div>
<div class="a" style="left:5px;top:246px;width:808px;height:16px;background:linear-gradient(#f0f0f0,#ececec 35%,#dcdcdc 40%,#dadada);border-top:1px solid #d8d8d8;border-bottom:1px solid #cccccc"></div>
<div class="a" style="left:0;top:468px;width:813px;height:3px;background:#e6e6e6"></div>
<div class="a" style="left:4px;top:262px;width:809px;height:208px;background:#fff;border-left:1px solid #c8c8c8;border-bottom:2px solid #c4c4c4"></div>
<div class="a" style="left:5px;top:246.5px;width:42px;height:15.5px;background:linear-gradient(#ececec,#dedede);border:1px solid #c8c8c8;border-bottom:none"></div>
<div class="t" style="left:5px;top:250.6px;width:42px;text-align:center;font-size:8px;color:#222">系统硬件</div>
<div class="a" style="left:47px;top:246.5px;width:42px;height:15.5px;background:linear-gradient(#ececec,#dedede);border:1px solid #c8c8c8;border-bottom:none"></div>
<div class="t" style="left:47px;top:250.6px;width:42px;text-align:center;font-size:8px;color:#222">马达设置</div>
<div class="a" style="left:89px;top:246.5px;width:41px;height:15.5px;background:linear-gradient(#ececec,#dedede);border:1px solid #c8c8c8;border-bottom:none"></div>
<div class="t" style="left:89px;top:250.6px;width:41px;text-align:center;font-size:8px;color:#222">数据标定</div>
<div class="a" style="left:130px;top:246.5px;width:42px;height:15.5px;background:linear-gradient(#ececec,#dedede);border:1px solid #c8c8c8;border-bottom:none"></div>
<div class="t" style="left:130px;top:250.6px;width:42px;text-align:center;font-size:8px;color:#222">系统设置</div>
<div class="a" style="left:172px;top:246.5px;width:33px;height:15.5px;background:linear-gradient(#ececec,#dedede);border:1px solid #c8c8c8;border-bottom:none"></div>
<div class="t" style="left:172px;top:250.6px;width:33px;text-align:center;font-size:8px;color:#222">状态栏</div>
<div class="a" style="left:629px;top:246.5px;width:24px;height:15.5px;background:linear-gradient(#ececec,#dedede);border:1px solid #c8c8c8;border-bottom:none"></div>
<div class="t" style="left:629px;top:250.6px;width:24px;text-align:center;font-size:8px;color:#222">清洗</div>
<div class="a" style="left:653px;top:246.5px;width:26px;height:15.5px;background:linear-gradient(#ececec,#dedede);border:1px solid #c8c8c8;border-bottom:none"></div>
<div class="t" style="left:653px;top:250.6px;width:26px;text-align:center;font-size:8px;color:#222">分析</div>
<div class="a" style="left:679px;top:246.5px;width:26px;height:15.5px;background:linear-gradient(#ececec,#dedede);border:1px solid #c8c8c8;border-bottom:none"></div>
<div class="t" style="left:679px;top:250.6px;width:26px;text-align:center;font-size:8px;color:#222">拉直</div>
<div class="a" style="left:705px;top:246.5px;width:40px;height:15.5px;background:linear-gradient(#ececec,#dedede);border:1px solid #c8c8c8;border-bottom:none"></div>
<div class="t" style="left:705px;top:250.6px;width:40px;text-align:center;font-size:8px;color:#222">手动马达</div>
<div class="a" style="left:745px;top:246px;width:43px;height:17px;background:#fff;border:1px solid #cfcfcf;border-bottom:none"></div>
<div class="t" style="left:745px;top:249px;width:43px;text-align:center;font-size:8px;color:#222">流程设置</div>
<div class="t" style="left:8px;top:268px;font-size:8px;color:#222;">当前流程</div>
<div class="a" style="left:43.2px;top:264.3px;width:56.8px;height:15px;background:#fff;border:1px solid #c8c8c8"></div>
<div class="t" style="left:46px;top:267.5px;font-size:8.5px;color:#222;letter-spacing:-0.2px">TEST-1-</div>
<div class="a" style="left:91.5px;top:265.5px;width:7px;height:13px;background:#ececec;border:1px solid #c4c4c4"></div>
<svg class="a" style="left:93px;top:270.5px" width="4" height="3"><polygon points="0,0 4,0 2,2.5" fill="#333"/></svg>
<div class="a" style="left:101px;top:265px;width:36px;height:17px;background:linear-gradient(#efefef,#e8e8e8 50%,#dadada 51%,#dddddd);border:1px solid #c4c4c4;border-radius:2px;box-shadow:1px 1px 1px #b8b8b8"></div>
<div class="t" style="left:118.3px;top:270.35px;font-size:6.3px;color:#222;font-weight:bold">新建</div>
<svg class="a" style="left:105px;top:269px" width="9" height="9"><path d="M4.5 0 L6 2.5 L6 3 L6.5 3 L9 4.5 L6.5 6 L6 6 L6 6.5 L4.5 9 L3 6.5 L3 6 L2.5 6 L0 4.5 L2.5 3 L3 3 L3 2.5 Z" fill="#5b9ee6"/><rect x="3.5" y="3.5" width="2" height="2" fill="#a8cff5"/></svg>
<div class="a" style="left:140px;top:265px;width:35.5px;height:17px;background:linear-gradient(#efefef,#e8e8e8 50%,#dadada 51%,#dddddd);border:1px solid #c4c4c4;border-radius:2px;box-shadow:1px 1px 1px #b8b8b8"></div>
<div class="t" style="left:155.4px;top:270.35px;font-size:6.3px;color:#222;font-weight:bold">删除</div>
<svg class="a" style="left:143px;top:272px" width="9" height="3"><rect x="0" y="0.3" width="9" height="2.2" fill="#5b9ee6"/></svg>
<div class="t" style="left:19px;top:290px;font-size:6px;color:#ff3030;">氢氧流量mL/min</div>
<div class="t" style="left:90.3px;top:289px;font-size:6px;color:#333;transform:scale(0.94);transform-origin:0 50%">火焰运动模式</div>
<div class="a" style="left:127px;top:287px;width:47px;height:11px;background:#fff;border:1px solid #f6f6f6"></div>
<div class="a" style="left:127.6px;top:289.2px;width:6px;height:6px;border-radius:50%;background:radial-gradient(#1f5fa8 45%,#c8d0d8 55%);"></div>
<div class="t" style="left:135.2px;top:289.3px;font-size:6px;color:#ff3040;transform:scale(0.92);transform-origin:0 50%">左到右</div>
<div class="a" style="left:153.3px;top:289.2px;width:6px;height:6px;border-radius:50%;background:#dde2e8;border:1px solid #c0c8d0"></div>
<div class="t" style="left:159.8px;top:289.3px;font-size:6px;color:#ff3040;transform:scale(0.97);transform-origin:0 50%">扫描</div>
<div class="t" style="left:16px;top:304.3px;font-size:6.5px;color:#333;">O2</div>
<div class="sp" style="left:27px;top:301.4px;width:39.5px;height:11px"><div class="v" style="color:#333;font-size:6.3px;top:2.15px">0</div><div class="ar" style="width:8px"></div></div>
<svg class="a" style="left:58.5px;top:301.4px" width="8" height="11"><rect x="1.5" y="1.90" width="5" height="3" fill="#dfe3f0"/><rect x="1.5" y="6.10" width="5" height="3" fill="#dfe3f0"/><polygon points="2.7,4.5 5.3,4.5 4.0,2.9" fill="#6878a8"/><polygon points="2.7,6.5 5.3,6.5 4.0,8.1" fill="#6878a8"/></svg>
<div class="t" style="left:72px;top:304.3px;font-size:6.5px;color:#333;">H2</div>
<div class="sp" style="left:81px;top:301.4px;width:44px;height:11px"><div class="v" style="color:#333;font-size:6.3px;top:2.15px">75</div><div class="ar" style="width:8px"></div></div>
<svg class="a" style="left:117px;top:301.4px" width="8" height="11"><rect x="1.5" y="1.90" width="5" height="3" fill="#dfe3f0"/><rect x="1.5" y="6.10" width="5" height="3" fill="#dfe3f0"/><polygon points="2.7,4.5 5.3,4.5 4.0,2.9" fill="#6878a8"/><polygon points="2.7,6.5 5.3,6.5 4.0,8.1" fill="#6878a8"/></svg>
<div class="t" style="left:-31px;top:322.7px;width:80px;text-align:right;font-size:6px;color:#333;transform:scale(0.92);transform-origin:100% 50%">火焰到达速度</div>
<div class="sp" style="left:50px;top:320.1px;width:37px;height:11.5px"><div class="v" style="color:#333;font-size:6.3px;top:2.40px">20</div><div class="ar" style="width:7px"></div></div>
<svg class="a" style="left:80px;top:320.1px" width="7" height="11.5"><rect x="1.5" y="2.15" width="4" height="3" fill="#dfe3f0"/><rect x="1.5" y="6.35" width="4" height="3" fill="#dfe3f0"/><polygon points="2.2,4.75 4.8,4.75 3.5,3.15" fill="#6878a8"/><polygon points="2.2,6.75 4.8,6.75 3.5,8.35" fill="#6878a8"/></svg>
<div class="t" style="left:55px;top:322.7px;width:80px;text-align:right;font-size:6px;color:#333;transform:scale(0.92);transform-origin:100% 50%">光纤偏移位置</div>
<div class="sp" style="left:136px;top:320.1px;width:36.5px;height:11.5px"><div class="v" style="color:#333;font-size:6.3px;top:2.40px">40</div><div class="ar" style="width:7px"></div></div>
<svg class="a" style="left:165.5px;top:320.1px" width="7" height="11.5"><rect x="1.5" y="2.15" width="4" height="3" fill="#dfe3f0"/><rect x="1.5" y="6.35" width="4" height="3" fill="#dfe3f0"/><polygon points="2.2,4.75 4.8,4.75 3.5,3.15" fill="#6878a8"/><polygon points="2.2,6.75 4.8,6.75 3.5,8.35" fill="#6878a8"/></svg>
<div class="t" style="left:-31px;top:336.2px;width:80px;text-align:right;font-size:6px;color:#333;transform:scale(0.92);transform-origin:100% 50%">封装角度</div>
<div class="sp" style="left:50px;top:333.6px;width:37px;height:11.5px"><div class="v" style="color:#333;font-size:6.3px;top:2.40px">2</div><div class="ar" style="width:7px"></div></div>
<svg class="a" style="left:80px;top:333.6px" width="7" height="11.5"><rect x="1.5" y="2.15" width="4" height="3" fill="#dfe3f0"/><rect x="1.5" y="6.35" width="4" height="3" fill="#dfe3f0"/><polygon points="2.2,4.75 4.8,4.75 3.5,3.15" fill="#6878a8"/><polygon points="2.2,6.75 4.8,6.75 3.5,8.35" fill="#6878a8"/></svg>
<div class="t" style="left:55px;top:336.2px;width:80px;text-align:right;font-size:6px;color:#333;transform:scale(0.92);transform-origin:100% 50%">火焰左初始位置</div>
<div class="sp" style="left:136px;top:333.6px;width:36.5px;height:11.5px"><div class="v" style="color:#333;font-size:6.3px;top:2.40px">25</div><div class="ar" style="width:7px"></div></div>
<svg class="a" style="left:165.5px;top:333.6px" width="7" height="11.5"><rect x="1.5" y="2.15" width="4" height="3" fill="#dfe3f0"/><rect x="1.5" y="6.35" width="4" height="3" fill="#dfe3f0"/><polygon points="2.2,4.75 4.8,4.75 3.5,3.15" fill="#6878a8"/><polygon points="2.2,6.75 4.8,6.75 3.5,8.35" fill="#6878a8"/></svg>
<div class="t" style="left:-31px;top:354.2px;width:80px;text-align:right;font-size:6px;color:#333;transform:scale(0.92);transform-origin:100% 50%">火焰预触位</div>
<div class="sp" style="left:50px;top:351.6px;width:37px;height:11.5px"><div class="v" style="color:#333;font-size:6.3px;top:2.40px">22.98</div><div class="ar" style="width:7px"></div></div>
<svg class="a" style="left:80px;top:351.6px" width="7" height="11.5"><rect x="1.5" y="2.15" width="4" height="3" fill="#dfe3f0"/><rect x="1.5" y="6.35" width="4" height="3" fill="#dfe3f0"/><polygon points="2.2,4.75 4.8,4.75 3.5,3.15" fill="#6878a8"/><polygon points="2.2,6.75 4.8,6.75 3.5,8.35" fill="#6878a8"/></svg>
<div class="t" style="left:55px;top:354.2px;width:80px;text-align:right;font-size:6px;color:#333;transform:scale(0.92);transform-origin:100% 50%">火焰扫描初始位置</div>
<div class="sp" style="left:136px;top:351.6px;width:36.5px;height:11.5px"><div class="v" style="color:#333;font-size:6.3px;top:2.40px">0</div><div class="ar" style="width:7px"></div></div>
<svg class="a" style="left:165.5px;top:351.6px" width="7" height="11.5"><rect x="1.5" y="2.15" width="4" height="3" fill="#dfe3f0"/><rect x="1.5" y="6.35" width="4" height="3" fill="#dfe3f0"/><polygon points="2.2,4.75 4.8,4.75 3.5,3.15" fill="#6878a8"/><polygon points="2.2,6.75 4.8,6.75 3.5,8.35" fill="#6878a8"/></svg>
<div class="t" style="left:-31px;top:367.2px;width:80px;text-align:right;font-size:6px;color:#333;transform:scale(0.92);transform-origin:100% 50%">火焰接触位</div>
<div class="sp" style="left:50px;top:364.6px;width:37px;height:11.5px"><div class="v" style="color:#333;font-size:6.3px;top:2.40px">22.7</div><div class="ar" style="width:7px"></div></div>
<svg class="a" style="left:80px;top:364.6px" width="7" height="11.5"><rect x="1.5" y="2.15" width="4" height="3" fill="#dfe3f0"/><rect x="1.5" y="6.35" width="4" height="3" fill="#dfe3f0"/><polygon points="2.2,4.75 4.8,4.75 3.5,3.15" fill="#6878a8"/><polygon points="2.2,6.75 4.8,6.75 3.5,8.35" fill="#6878a8"/></svg>
<div class="t" style="left:55px;top:367.2px;width:80px;text-align:right;font-size:6px;color:#333;transform:scale(0.92);transform-origin:100% 50%">扫描偏置正比</div>
<div class="sp" style="left:136px;top:364.6px;width:36.5px;height:11.5px"><div class="v" style="color:#333;font-size:6.3px;top:2.40px">0</div><div class="ar" style="width:7px"></div></div>
<svg class="a" style="left:165.5px;top:364.6px" width="7" height="11.5"><rect x="1.5" y="2.15" width="4" height="3" fill="#dfe3f0"/><rect x="1.5" y="6.35" width="4" height="3" fill="#dfe3f0"/><polygon points="2.2,4.75 4.8,4.75 3.5,3.15" fill="#6878a8"/><polygon points="2.2,6.75 4.8,6.75 3.5,8.35" fill="#6878a8"/></svg>
<div class="t" style="left:-31px;top:385.2px;width:80px;text-align:right;font-size:6px;color:#333;transform:scale(0.92);transform-origin:100% 50%">预融预热时间</div>
<div class="sp" style="left:50px;top:382.6px;width:37px;height:11.5px"><div class="v" style="color:#333;font-size:6.3px;top:2.40px">3</div><div class="ar" style="width:7px"></div></div>
<svg class="a" style="left:80px;top:382.6px" width="7" height="11.5"><rect x="1.5" y="2.15" width="4" height="3" fill="#dfe3f0"/><rect x="1.5" y="6.35" width="4" height="3" fill="#dfe3f0"/><polygon points="2.2,4.75 4.8,4.75 3.5,3.15" fill="#6878a8"/><polygon points="2.2,6.75 4.8,6.75 3.5,8.35" fill="#6878a8"/></svg>
<div class="t" style="left:-31px;top:397.7px;width:80px;text-align:right;font-size:6px;color:#333;transform:scale(0.92);transform-origin:100% 50%">熔融预热时间</div>
<div class="sp" style="left:50px;top:395.1px;width:37px;height:11.5px"><div class="v" style="color:#333;font-size:6.3px;top:2.40px">3</div><div class="ar" style="width:7px"></div></div>
<svg class="a" style="left:80px;top:395.1px" width="7" height="11.5"><rect x="1.5" y="2.15" width="4" height="3" fill="#dfe3f0"/><rect x="1.5" y="6.35" width="4" height="3" fill="#dfe3f0"/><polygon points="2.2,4.75 4.8,4.75 3.5,3.15" fill="#6878a8"/><polygon points="2.2,6.75 4.8,6.75 3.5,8.35" fill="#6878a8"/></svg>
<div class="t" style="left:-31px;top:415.7px;width:80px;text-align:right;font-size:6px;color:#333;transform:scale(0.92);transform-origin:100% 50%">预融退火时间</div>
<div class="sp" style="left:50px;top:413.1px;width:37px;height:11.5px"><div class="v" style="color:#333;font-size:6.3px;top:2.40px">0</div><div class="ar" style="width:7px"></div></div>
<svg class="a" style="left:80px;top:413.1px" width="7" height="11.5"><rect x="1.5" y="2.15" width="4" height="3" fill="#dfe3f0"/><rect x="1.5" y="6.35" width="4" height="3" fill="#dfe3f0"/><polygon points="2.2,4.75 4.8,4.75 3.5,3.15" fill="#6878a8"/><polygon points="2.2,6.75 4.8,6.75 3.5,8.35" fill="#6878a8"/></svg>
<div class="t" style="left:-31px;top:428.7px;width:80px;text-align:right;font-size:6px;color:#333;transform:scale(0.92);transform-origin:100% 50%">熔融退火时间</div>
<div class="sp" style="left:50px;top:426.1px;width:37px;height:11.5px"><div class="v" style="color:#333;font-size:6.3px;top:2.40px">0</div><div class="ar" style="width:7px"></div></div>
<svg class="a" style="left:80px;top:426.1px" width="7" height="11.5"><rect x="1.5" y="2.15" width="4" height="3" fill="#dfe3f0"/><rect x="1.5" y="6.35" width="4" height="3" fill="#dfe3f0"/><polygon points="2.2,4.75 4.8,4.75 3.5,3.15" fill="#6878a8"/><polygon points="2.2,6.75 4.8,6.75 3.5,8.35" fill="#6878a8"/></svg>
<div class="a" style="left:111px;top:391px;width:57px;height:30px;background:linear-gradient(#efefef,#e8e8e8 50%,#dadada 51%,#dddddd);border:1px solid #c4c4c4;border-radius:2px;box-shadow:1px 1px 1px #b8b8b8"></div>
<div class="t" style="left:111px;top:401.75px;width:57px;text-align:center;font-size:8.5px;color:#333">应用</div>
<div class="a" style="left:191px;top:287.40px;width:612px;height:10.93px;background:#d3d3d3"></div>
<div class="a" style="left:191px;top:331.12px;width:612px;height:10.93px;background:#d3d3d3"></div>
<div class="a" style="left:191px;top:352.98px;width:612px;height:10.93px;background:#d3d3d3"></div>
<div class="a" style="left:191px;top:385.77px;width:612px;height:10.93px;background:#d3d3d3"></div>
<div class="a" style="left:191px;top:407.63px;width:612px;height:10.93px;background:#d3d3d3"></div>
<div class="a" style="left:191px;top:440.42px;width:612px;height:10.93px;background:#d3d3d3"></div>
<div class="a" style="left:191px;top:309.06px;width:612px;height:10.8px;background:#7dbcf7"></div>
<div class="a" style="left:191px;top:363.71px;width:612px;height:10.8px;background:#7dbcf7"></div>
<div class="a" style="left:191px;top:418.36px;width:612px;height:10.8px;background:#7dbcf7"></div>
<div class="t" style="left:211px;top:277.3px;font-size:6px;color:#333;">预拉</div>
<div class="a" style="left:223.2px;top:276.5px;width:9.8px;height:10.2px;background:#fff;border:1px solid #808080"></div>
<div class="t" style="left:237px;top:279px;font-size:6px;color:#ff3040;">预拉</div>
<div class="t" style="left:260.5px;top:278px;font-size:6px;color:#333;">拉伸</div>
<div class="a" style="left:273px;top:277px;width:9px;height:10px;background:#33cc22"></div>
<div class="t" style="left:290px;top:278px;font-size:8.5px;color:#ff3355;">1</div>
<div class="t" style="left:321.0px;top:278px;font-size:6px;color:#333;">拉伸</div>
<div class="a" style="left:333.5px;top:277px;width:9px;height:10px;background:#33cc22"></div>
<div class="t" style="left:350.5px;top:278px;font-size:8.5px;color:#ff3355;">2</div>
<div class="t" style="left:380.5px;top:278px;font-size:6px;color:#333;">拉伸</div>
<div class="a" style="left:393px;top:277px;width:10px;height:10px;background:#fff;border:1px solid #707070"></div>
<div class="t" style="left:410px;top:278px;font-size:8.5px;color:#ff3355;">3</div>
<div class="t" style="left:440.0px;top:278px;font-size:6px;color:#333;">拉伸</div>
<div class="a" style="left:452.5px;top:277px;width:10px;height:10px;background:#fff;border:1px solid #707070"></div>
<div class="t" style="left:469.5px;top:278px;font-size:8.5px;color:#ff3355;">4</div>
<div class="t" style="left:507.5px;top:278px;font-size:6px;color:#333;">拉伸</div>
<div class="a" style="left:520px;top:277px;width:10px;height:10px;background:#fff;border:1px solid #707070"></div>
<div class="t" style="left:539.5px;top:278px;font-size:8.5px;color:#ff3355;">5</div>
<div class="t" style="left:565.5px;top:278px;font-size:6px;color:#333;">拉伸</div>
<div class="a" style="left:578px;top:277px;width:10px;height:10px;background:#fff;border:1px solid #707070"></div>
<div class="t" style="left:597.5px;top:278px;font-size:8.5px;color:#ff3355;">6</div>
<div class="t" style="left:623.0px;top:278px;font-size:6px;color:#333;">拉伸</div>
<div class="a" style="left:635.5px;top:277px;width:10px;height:10px;background:#fff;border:1px solid #707070"></div>
<div class="t" style="left:655.0px;top:278px;font-size:8.5px;color:#ff3355;">7</div>
<div class="t" style="left:684.0px;top:278px;font-size:6px;color:#333;">拉伸</div>
<div class="a" style="left:696.5px;top:277px;width:10px;height:10px;background:#fff;border:1px solid #707070"></div>
<div class="t" style="left:716.0px;top:278px;font-size:8.5px;color:#ff3355;">8</div>
<div class="t" style="left:745.5px;top:278px;font-size:6px;color:#333;">拉伸</div>
<div class="a" style="left:758px;top:277px;width:10px;height:10px;background:#fff;border:1px solid #707070"></div>
<div class="t" style="left:777.5px;top:278px;font-size:8.5px;color:#ff3355;">9</div>
<div class="t" style="left:185.2px;top:289.31px;width:40px;text-align:right;font-size:8px;color:#222;transform:scale(0.93);transform-origin:100% 50%">延时时间</div>
<div class="t" style="left:185.2px;top:300.24px;width:40px;text-align:right;font-size:8px;color:#222;transform:scale(0.93);transform-origin:100% 50%">预设时间</div>
<div class="t" style="left:185.2px;top:333.03px;width:40px;text-align:right;font-size:8px;color:#222;transform:scale(0.93);transform-origin:100% 50%">初始速度</div>
<div class="t" style="left:185.2px;top:343.96px;width:40px;text-align:right;font-size:8px;color:#555;transform:scale(0.93);transform-origin:100% 50%">结束速度</div>
<div class="t" style="left:185.2px;top:354.89px;width:40px;text-align:right;font-size:8px;color:#222;transform:scale(0.93);transform-origin:100% 50%">拉伸长度</div>
<div class="t" style="left:185.2px;top:387.68px;width:40px;text-align:right;font-size:8px;color:#222;transform:scale(0.93);transform-origin:100% 50%">初始速度</div>
<div class="t" style="left:185.2px;top:398.61px;width:40px;text-align:right;font-size:8px;color:#555;transform:scale(0.93);transform-origin:100% 50%">结束速度</div>
<div class="t" style="left:185.2px;top:409.54px;width:40px;text-align:right;font-size:8px;color:#222;transform:scale(0.93);transform-origin:100% 50%">摆动长度</div>
<div class="t" style="left:191px;top:430.49px;width:33px;text-align:right;font-size:9px;color:#333">O2</div>
<div class="t" style="left:191px;top:441.42px;width:33px;text-align:right;font-size:9px;color:#333">H2</div>
<div class="t" style="left:487.6px;top:289.31px;width:40px;text-align:right;font-size:8px;color:#222;transform:scale(0.93);transform-origin:100% 50%">延时时间</div>
<div class="t" style="left:487.6px;top:300.24px;width:40px;text-align:right;font-size:8px;color:#222;transform:scale(0.93);transform-origin:100% 50%">预设时间</div>
<div class="t" style="left:487.6px;top:333.03px;width:40px;text-align:right;font-size:8px;color:#222;transform:scale(0.93);transform-origin:100% 50%">初始速度</div>
<div class="t" style="left:487.6px;top:343.96px;width:40px;text-align:right;font-size:8px;color:#aaa;transform:scale(0.93);transform-origin:100% 50%">结束速度</div>
<div class="t" style="left:487.6px;top:354.89px;width:40px;text-align:right;font-size:8px;color:#222;transform:scale(0.93);transform-origin:100% 50%">拉伸长度</div>
<div class="t" style="left:487.6px;top:387.68px;width:40px;text-align:right;font-size:8px;color:#222;transform:scale(0.93);transform-origin:100% 50%">初始速度</div>
<div class="t" style="left:487.6px;top:398.61px;width:40px;text-align:right;font-size:8px;color:#aaa;transform:scale(0.93);transform-origin:100% 50%">结束速度</div>
<div class="t" style="left:487.6px;top:409.54px;width:40px;text-align:right;font-size:8px;color:#222;transform:scale(0.93);transform-origin:100% 50%">摆动长度</div>
<div class="t" style="left:494px;top:430.49px;width:33px;text-align:right;font-size:9px;color:#333">O2</div>
<div class="t" style="left:494px;top:441.42px;width:33px;text-align:right;font-size:9px;color:#333">H2</div>
<div class="t" style="left:203.5px;top:311.66px;font-size:8px;color:#1a2238;transform:scale(0.93);transform-origin:0 50%">运动模式</div>
<div class="t" style="left:238.0px;top:312.76px;font-size:6px;color:#ff3040">拉伸</div>
<div class="t" style="left:203.5px;top:366.31px;font-size:8px;color:#1a2238;transform:scale(0.93);transform-origin:0 50%">运动模式</div>
<div class="t" style="left:238.0px;top:367.41px;font-size:6px;color:#ff3040">火焰</div>
<div class="t" style="left:505.5px;top:311.66px;font-size:8px;color:#1a2238;transform:scale(0.93);transform-origin:0 50%">运动模式</div>
<div class="t" style="left:540.0px;top:312.76px;font-size:6px;color:#ff3040">拉伸</div>
<div class="t" style="left:505.5px;top:366.31px;font-size:8px;color:#1a2238;transform:scale(0.93);transform-origin:0 50%">运动模式</div>
<div class="t" style="left:540.0px;top:367.41px;font-size:6px;color:#ff3040">火焰</div>
<div class="t" style="left:226px;top:420.56px;font-size:7px;color:#e8304a">mL/min</div>
<div class="t" style="left:527px;top:420.56px;font-size:7px;color:#e8304a">mL/min</div>
<div class="sp" style="left:226.5px;top:287.7px;width:27px;height:10.73px"><div class="v" style="color:#333;font-size:6.3px;top:1.02px">0</div><div class="ar" style="width:7px"></div></div>
<svg class="a" style="left:246.5px;top:287.7px" width="7" height="10.73"><rect x="1.5" y="1.77" width="4" height="3" fill="#dfe3f0"/><rect x="1.5" y="5.96" width="4" height="3" fill="#dfe3f0"/><polygon points="2.2,4.365 4.8,4.365 3.5,2.765" fill="#6878a8"/><polygon points="2.2,6.365 4.8,6.365 3.5,7.965" fill="#6878a8"/></svg>
<div class="sp" style="left:282px;top:287.7px;width:27px;height:10.73px"><div class="v" style="color:#333;font-size:6.3px;top:1.02px">0</div><div class="ar" style="width:7px"></div></div>
<svg class="a" style="left:302px;top:287.7px" width="7" height="10.73"><rect x="1.5" y="1.77" width="4" height="3" fill="#dfe3f0"/><rect x="1.5" y="5.96" width="4" height="3" fill="#dfe3f0"/><polygon points="2.2,4.365 4.8,4.365 3.5,2.765" fill="#6878a8"/><polygon points="2.2,6.365 4.8,6.365 3.5,7.965" fill="#6878a8"/></svg>
<div class="sp" style="left:342.5px;top:287.7px;width:27px;height:10.73px"><div class="v" style="color:#333;font-size:6.3px;top:1.02px">0</div><div class="ar" style="width:7px"></div></div>
<svg class="a" style="left:362.5px;top:287.7px" width="7" height="10.73"><rect x="1.5" y="1.77" width="4" height="3" fill="#dfe3f0"/><rect x="1.5" y="5.96" width="4" height="3" fill="#dfe3f0"/><polygon points="2.2,4.365 4.8,4.365 3.5,2.765" fill="#6878a8"/><polygon points="2.2,6.365 4.8,6.365 3.5,7.965" fill="#6878a8"/></svg>
<div class="sp" style="left:402px;top:287.7px;width:27px;height:10.73px"><div class="v" style="color:#333;font-size:6.3px;top:1.02px">0</div><div class="ar" style="width:7px"></div></div>
<svg class="a" style="left:422px;top:287.7px" width="7" height="10.73"><rect x="1.5" y="1.77" width="4" height="3" fill="#dfe3f0"/><rect x="1.5" y="5.96" width="4" height="3" fill="#dfe3f0"/><polygon points="2.2,4.365 4.8,4.365 3.5,2.765" fill="#6878a8"/><polygon points="2.2,6.365 4.8,6.365 3.5,7.965" fill="#6878a8"/></svg>
<div class="sp" style="left:461.5px;top:287.7px;width:27px;height:10.73px"><div class="v" style="color:#333;font-size:6.3px;top:1.02px">0</div><div class="ar" style="width:7px"></div></div>
<svg class="a" style="left:481.5px;top:287.7px" width="7" height="10.73"><rect x="1.5" y="1.77" width="4" height="3" fill="#dfe3f0"/><rect x="1.5" y="5.96" width="4" height="3" fill="#dfe3f0"/><polygon points="2.2,4.365 4.8,4.365 3.5,2.765" fill="#6878a8"/><polygon points="2.2,6.365 4.8,6.365 3.5,7.965" fill="#6878a8"/></svg>
<div class="sp" style="left:529px;top:287.7px;width:27px;height:10.73px"><div class="v" style="color:#333;font-size:6.3px;top:1.02px">0</div><div class="ar" style="width:7px"></div></div>
<svg class="a" style="left:549px;top:287.7px" width="7" height="10.73"><rect x="1.5" y="1.77" width="4" height="3" fill="#dfe3f0"/><rect x="1.5" y="5.96" width="4" height="3" fill="#dfe3f0"/><polygon points="2.2,4.365 4.8,4.365 3.5,2.765" fill="#6878a8"/><polygon points="2.2,6.365 4.8,6.365 3.5,7.965" fill="#6878a8"/></svg>
<div class="sp" style="left:587px;top:287.7px;width:27px;height:10.73px"><div class="v" style="color:#333;font-size:6.3px;top:1.02px">0</div><div class="ar" style="width:7px"></div></div>
<svg class="a" style="left:607px;top:287.7px" width="7" height="10.73"><rect x="1.5" y="1.77" width="4" height="3" fill="#dfe3f0"/><rect x="1.5" y="5.96" width="4" height="3" fill="#dfe3f0"/><polygon points="2.2,4.365 4.8,4.365 3.5,2.765" fill="#6878a8"/><polygon points="2.2,6.365 4.8,6.365 3.5,7.965" fill="#6878a8"/></svg>
<div class="sp" style="left:644.5px;top:287.7px;width:27px;height:10.73px"><div class="v" style="color:#333;font-size:6.3px;top:1.02px">0</div><div class="ar" style="width:7px"></div></div>
<svg class="a" style="left:664.5px;top:287.7px" width="7" height="10.73"><rect x="1.5" y="1.77" width="4" height="3" fill="#dfe3f0"/><rect x="1.5" y="5.96" width="4" height="3" fill="#dfe3f0"/><polygon points="2.2,4.365 4.8,4.365 3.5,2.765" fill="#6878a8"/><polygon points="2.2,6.365 4.8,6.365 3.5,7.965" fill="#6878a8"/></svg>
<div class="sp" style="left:705.5px;top:287.7px;width:27px;height:10.73px"><div class="v" style="color:#333;font-size:6.3px;top:1.02px">0</div><div class="ar" style="width:7px"></div></div>
<svg class="a" style="left:725.5px;top:287.7px" width="7" height="10.73"><rect x="1.5" y="1.77" width="4" height="3" fill="#dfe3f0"/><rect x="1.5" y="5.96" width="4" height="3" fill="#dfe3f0"/><polygon points="2.2,4.365 4.8,4.365 3.5,2.765" fill="#6878a8"/><polygon points="2.2,6.365 4.8,6.365 3.5,7.965" fill="#6878a8"/></svg>
<div class="sp" style="left:767px;top:287.7px;width:27px;height:10.73px"><div class="v" style="color:#333;font-size:6.3px;top:1.02px">0</div><div class="ar" style="width:7px"></div></div>
<svg class="a" style="left:787px;top:287.7px" width="7" height="10.73"><rect x="1.5" y="1.77" width="4" height="3" fill="#dfe3f0"/><rect x="1.5" y="5.96" width="4" height="3" fill="#dfe3f0"/><polygon points="2.2,4.365 4.8,4.365 3.5,2.765" fill="#6878a8"/><polygon points="2.2,6.365 4.8,6.365 3.5,7.965" fill="#6878a8"/></svg>
<div class="sp" style="left:226.5px;top:298.63px;width:27px;height:10.73px"><div class="v" style="color:#333;font-size:6.3px;top:1.02px">0</div><div class="ar" style="width:7px"></div></div>
<svg class="a" style="left:246.5px;top:298.63px" width="7" height="10.73"><rect x="1.5" y="1.77" width="4" height="3" fill="#dfe3f0"/><rect x="1.5" y="5.96" width="4" height="3" fill="#dfe3f0"/><polygon points="2.2,4.365 4.8,4.365 3.5,2.765" fill="#6878a8"/><polygon points="2.2,6.365 4.8,6.365 3.5,7.965" fill="#6878a8"/></svg>
<div class="sp" style="left:282px;top:298.63px;width:27px;height:10.73px"><div class="v" style="color:#333;font-size:6.3px;top:1.02px">40</div><div class="ar" style="width:7px"></div></div>
<svg class="a" style="left:302px;top:298.63px" width="7" height="10.73"><rect x="1.5" y="1.77" width="4" height="3" fill="#dfe3f0"/><rect x="1.5" y="5.96" width="4" height="3" fill="#dfe3f0"/><polygon points="2.2,4.365 4.8,4.365 3.5,2.765" fill="#6878a8"/><polygon points="2.2,6.365 4.8,6.365 3.5,7.965" fill="#6878a8"/></svg>
<div class="sp" style="left:342.5px;top:298.63px;width:27px;height:10.73px"><div class="v" style="color:#333;font-size:6.3px;top:1.02px">7.009!</div><div class="ar" style="width:7px"></div></div>
<svg class="a" style="left:362.5px;top:298.63px" width="7" height="10.73"><rect x="1.5" y="1.77" width="4" height="3" fill="#dfe3f0"/><rect x="1.5" y="5.96" width="4" height="3" fill="#dfe3f0"/><polygon points="2.2,4.365 4.8,4.365 3.5,2.765" fill="#6878a8"/><polygon points="2.2,6.365 4.8,6.365 3.5,7.965" fill="#6878a8"/></svg>
<div class="sp" style="left:402px;top:298.63px;width:27px;height:10.73px"><div class="v" style="color:#333;font-size:6.3px;top:1.02px">10</div><div class="ar" style="width:7px"></div></div>
<svg class="a" style="left:422px;top:298.63px" width="7" height="10.73"><rect x="1.5" y="1.77" width="4" height="3" fill="#dfe3f0"/><rect x="1.5" y="5.96" width="4" height="3" fill="#dfe3f0"/><polygon points="2.2,4.365 4.8,4.365 3.5,2.765" fill="#6878a8"/><polygon points="2.2,6.365 4.8,6.365 3.5,7.965" fill="#6878a8"/></svg>
<div class="sp" style="left:461.5px;top:298.63px;width:27px;height:10.73px"><div class="v" style="color:#333;font-size:6.3px;top:1.02px">3</div><div class="ar" style="width:7px"></div></div>
<svg class="a" style="left:481.5px;top:298.63px" width="7" height="10.73"><rect x="1.5" y="1.77" width="4" height="3" fill="#dfe3f0"/><rect x="1.5" y="5.96" width="4" height="3" fill="#dfe3f0"/><polygon points="2.2,4.365 4.8,4.365 3.5,2.765" fill="#6878a8"/><polygon points="2.2,6.365 4.8,6.365 3.5,7.965" fill="#6878a8"/></svg>
<div class="sp" style="left:529px;top:298.63px;width:27px;height:10.73px"><div class="v" style="color:#333;font-size:6.3px;top:1.02px">0</div><div class="ar" style="width:7px"></div></div>
<svg class="a" style="left:549px;top:298.63px" width="7" height="10.73"><rect x="1.5" y="1.77" width="4" height="3" fill="#dfe3f0"/><rect x="1.5" y="5.96" width="4" height="3" fill="#dfe3f0"/><polygon points="2.2,4.365 4.8,4.365 3.5,2.765" fill="#6878a8"/><polygon points="2.2,6.365 4.8,6.365 3.5,7.965" fill="#6878a8"/></svg>
<div class="sp" style="left:587px;top:298.63px;width:27px;height:10.73px"><div class="v" style="color:#333;font-size:6.3px;top:1.02px">0</div><div class="ar" style="width:7px"></div></div>
<svg class="a" style="left:607px;top:298.63px" width="7" height="10.73"><rect x="1.5" y="1.77" width="4" height="3" fill="#dfe3f0"/><rect x="1.5" y="5.96" width="4" height="3" fill="#dfe3f0"/><polygon points="2.2,4.365 4.8,4.365 3.5,2.765" fill="#6878a8"/><polygon points="2.2,6.365 4.8,6.365 3.5,7.965" fill="#6878a8"/></svg>
<div class="sp" style="left:644.5px;top:298.63px;width:27px;height:10.73px"><div class="v" style="color:#333;font-size:6.3px;top:1.02px">0</div><div class="ar" style="width:7px"></div></div>
<svg class="a" style="left:664.5px;top:298.63px" width="7" height="10.73"><rect x="1.5" y="1.77" width="4" height="3" fill="#dfe3f0"/><rect x="1.5" y="5.96" width="4" height="3" fill="#dfe3f0"/><polygon points="2.2,4.365 4.8,4.365 3.5,2.765" fill="#6878a8"/><polygon points="2.2,6.365 4.8,6.365 3.5,7.965" fill="#6878a8"/></svg>
<div class="sp" style="left:705.5px;top:298.63px;width:27px;height:10.73px"><div class="v" style="color:#333;font-size:6.3px;top:1.02px">0</div><div class="ar" style="width:7px"></div></div>
<svg class="a" style="left:725.5px;top:298.63px" width="7" height="10.73"><rect x="1.5" y="1.77" width="4" height="3" fill="#dfe3f0"/><rect x="1.5" y="5.96" width="4" height="3" fill="#dfe3f0"/><polygon points="2.2,4.365 4.8,4.365 3.5,2.765" fill="#6878a8"/><polygon points="2.2,6.365 4.8,6.365 3.5,7.965" fill="#6878a8"/></svg>
<div class="sp" style="left:767px;top:298.63px;width:27px;height:10.73px"><div class="v" style="color:#333;font-size:6.3px;top:1.02px">0</div><div class="ar" style="width:7px"></div></div>
<svg class="a" style="left:787px;top:298.63px" width="7" height="10.73"><rect x="1.5" y="1.77" width="4" height="3" fill="#dfe3f0"/><rect x="1.5" y="5.96" width="4" height="3" fill="#dfe3f0"/><polygon points="2.2,4.365 4.8,4.365 3.5,2.765" fill="#6878a8"/><polygon points="2.2,6.365 4.8,6.365 3.5,7.965" fill="#6878a8"/></svg>
<div class="sp" style="left:226.5px;top:331.42px;width:27px;height:10.73px"><div class="v" style="color:#333;font-size:6.3px;top:1.02px">0.5</div><div class="ar" style="width:7px"></div></div>
<svg class="a" style="left:246.5px;top:331.42px" width="7" height="10.73"><rect x="1.5" y="1.77" width="4" height="3" fill="#dfe3f0"/><rect x="1.5" y="5.96" width="4" height="3" fill="#dfe3f0"/><polygon points="2.2,4.365 4.8,4.365 3.5,2.765" fill="#6878a8"/><polygon points="2.2,6.365 4.8,6.365 3.5,7.965" fill="#6878a8"/></svg>
<div class="sp" style="left:282px;top:331.42px;width:27px;height:10.73px"><div class="v" style="color:#333;font-size:6.3px;top:1.02px">0.428</div><div class="ar" style="width:7px"></div></div>
<svg class="a" style="left:302px;top:331.42px" width="7" height="10.73"><rect x="1.5" y="1.77" width="4" height="3" fill="#dfe3f0"/><rect x="1.5" y="5.96" width="4" height="3" fill="#dfe3f0"/><polygon points="2.2,4.365 4.8,4.365 3.5,2.765" fill="#6878a8"/><polygon points="2.2,6.365 4.8,6.365 3.5,7.965" fill="#6878a8"/></svg>
<div class="sp" style="left:342.5px;top:331.42px;width:27px;height:10.73px"><div class="v" style="color:#333;font-size:6.3px;top:1.02px">0.428</div><div class="ar" style="width:7px"></div></div>
<svg class="a" style="left:362.5px;top:331.42px" width="7" height="10.73"><rect x="1.5" y="1.77" width="4" height="3" fill="#dfe3f0"/><rect x="1.5" y="5.96" width="4" height="3" fill="#dfe3f0"/><polygon points="2.2,4.365 4.8,4.365 3.5,2.765" fill="#6878a8"/><polygon points="2.2,6.365 4.8,6.365 3.5,7.965" fill="#6878a8"/></svg>
<div class="sp" style="left:402px;top:331.42px;width:27px;height:10.73px"><div class="v" style="color:#333;font-size:6.3px;top:1.02px">0.5</div><div class="ar" style="width:7px"></div></div>
<svg class="a" style="left:422px;top:331.42px" width="7" height="10.73"><rect x="1.5" y="1.77" width="4" height="3" fill="#dfe3f0"/><rect x="1.5" y="5.96" width="4" height="3" fill="#dfe3f0"/><polygon points="2.2,4.365 4.8,4.365 3.5,2.765" fill="#6878a8"/><polygon points="2.2,6.365 4.8,6.365 3.5,7.965" fill="#6878a8"/></svg>
<div class="sp" style="left:461.5px;top:331.42px;width:27px;height:10.73px"><div class="v" style="color:#333;font-size:6.3px;top:1.02px">0.5</div><div class="ar" style="width:7px"></div></div>
<svg class="a" style="left:481.5px;top:331.42px" width="7" height="10.73"><rect x="1.5" y="1.77" width="4" height="3" fill="#dfe3f0"/><rect x="1.5" y="5.96" width="4" height="3" fill="#dfe3f0"/><polygon points="2.2,4.365 4.8,4.365 3.5,2.765" fill="#6878a8"/><polygon points="2.2,6.365 4.8,6.365 3.5,7.965" fill="#6878a8"/></svg>
<div class="sp" style="left:529px;top:331.42px;width:27px;height:10.73px"><div class="v" style="color:#333;font-size:6.3px;top:1.02px">0</div><div class="ar" style="width:7px"></div></div>
<svg class="a" style="left:549px;top:331.42px" width="7" height="10.73"><rect x="1.5" y="1.77" width="4" height="3" fill="#dfe3f0"/><rect x="1.5" y="5.96" width="4" height="3" fill="#dfe3f0"/><polygon points="2.2,4.365 4.8,4.365 3.5,2.765" fill="#6878a8"/><polygon points="2.2,6.365 4.8,6.365 3.5,7.965" fill="#6878a8"/></svg>
<div class="sp" style="left:587px;top:331.42px;width:27px;height:10.73px"><div class="v" style="color:#333;font-size:6.3px;top:1.02px">0</div><div class="ar" style="width:7px"></div></div>
<svg class="a" style="left:607px;top:331.42px" width="7" height="10.73"><rect x="1.5" y="1.77" width="4" height="3" fill="#dfe3f0"/><rect x="1.5" y="5.96" width="4" height="3" fill="#dfe3f0"/><polygon points="2.2,4.365 4.8,4.365 3.5,2.765" fill="#6878a8"/><polygon points="2.2,6.365 4.8,6.365 3.5,7.965" fill="#6878a8"/></svg>
<div class="sp" style="left:644.5px;top:331.42px;width:27px;height:10.73px"><div class="v" style="color:#333;font-size:6.3px;top:1.02px">0</div><div class="ar" style="width:7px"></div></div>
<svg class="a" style="left:664.5px;top:331.42px" width="7" height="10.73"><rect x="1.5" y="1.77" width="4" height="3" fill="#dfe3f0"/><rect x="1.5" y="5.96" width="4" height="3" fill="#dfe3f0"/><polygon points="2.2,4.365 4.8,4.365 3.5,2.765" fill="#6878a8"/><polygon points="2.2,6.365 4.8,6.365 3.5,7.965" fill="#6878a8"/></svg>
<div class="sp" style="left:705.5px;top:331.42px;width:27px;height:10.73px"><div class="v" style="color:#333;font-size:6.3px;top:1.02px">0</div><div class="ar" style="width:7px"></div></div>
<svg class="a" style="left:725.5px;top:331.42px" width="7" height="10.73"><rect x="1.5" y="1.77" width="4" height="3" fill="#dfe3f0"/><rect x="1.5" y="5.96" width="4" height="3" fill="#dfe3f0"/><polygon points="2.2,4.365 4.8,4.365 3.5,2.765" fill="#6878a8"/><polygon points="2.2,6.365 4.8,6.365 3.5,7.965" fill="#6878a8"/></svg>
<div class="sp" style="left:767px;top:331.42px;width:27px;height:10.73px"><div class="v" style="color:#333;font-size:6.3px;top:1.02px">0</div><div class="ar" style="width:7px"></div></div>
<svg class="a" style="left:787px;top:331.42px" width="7" height="10.73"><rect x="1.5" y="1.77" width="4" height="3" fill="#dfe3f0"/><rect x="1.5" y="5.96" width="4" height="3" fill="#dfe3f0"/><polygon points="2.2,4.365 4.8,4.365 3.5,2.765" fill="#6878a8"/><polygon points="2.2,6.365 4.8,6.365 3.5,7.965" fill="#6878a8"/></svg>
<div class="sp" style="left:226.5px;top:342.34999999999997px;width:27px;height:10.73px"><div class="v" style="color:#333;font-size:6.3px;top:1.02px">1.5</div><div class="ar" style="width:7px"></div></div>
<svg class="a" style="left:246.5px;top:342.34999999999997px" width="7" height="10.73"><rect x="1.5" y="1.77" width="4" height="3" fill="#dfe3f0"/><rect x="1.5" y="5.96" width="4" height="3" fill="#dfe3f0"/><polygon points="2.2,4.365 4.8,4.365 3.5,2.765" fill="#6878a8"/><polygon points="2.2,6.365 4.8,6.365 3.5,7.965" fill="#6878a8"/></svg>
<div class="sp" style="left:282px;top:342.34999999999997px;width:27px;height:10.73px"><div class="v" style="color:#b8b8b8;font-size:6.3px;top:1.02px">0.8</div><div class="ar" style="width:7px"></div></div>
<svg class="a" style="left:302px;top:342.34999999999997px" width="7" height="10.73"><rect x="1.5" y="1.77" width="4" height="3" fill="#dfe3f0"/><rect x="1.5" y="5.96" width="4" height="3" fill="#dfe3f0"/><polygon points="2.2,4.365 4.8,4.365 3.5,2.765" fill="#6878a8"/><polygon points="2.2,6.365 4.8,6.365 3.5,7.965" fill="#6878a8"/></svg>
<div class="sp" style="left:342.5px;top:342.34999999999997px;width:27px;height:10.73px"><div class="v" style="color:#333;font-size:6.3px;top:1.02px">0</div><div class="ar" style="width:7px"></div></div>
<svg class="a" style="left:362.5px;top:342.34999999999997px" width="7" height="10.73"><rect x="1.5" y="1.77" width="4" height="3" fill="#dfe3f0"/><rect x="1.5" y="5.96" width="4" height="3" fill="#dfe3f0"/><polygon points="2.2,4.365 4.8,4.365 3.5,2.765" fill="#6878a8"/><polygon points="2.2,6.365 4.8,6.365 3.5,7.965" fill="#6878a8"/></svg>
<div class="sp" style="left:402px;top:342.34999999999997px;width:27px;height:10.73px"><div class="v" style="color:#b8b8b8;font-size:6.3px;top:1.02px">0.2</div><div class="ar" style="width:7px"></div></div>
<svg class="a" style="left:422px;top:342.34999999999997px" width="7" height="10.73"><rect x="1.5" y="1.77" width="4" height="3" fill="#dfe3f0"/><rect x="1.5" y="5.96" width="4" height="3" fill="#dfe3f0"/><polygon points="2.2,4.365 4.8,4.365 3.5,2.765" fill="#6878a8"/><polygon points="2.2,6.365 4.8,6.365 3.5,7.965" fill="#6878a8"/></svg>
<div class="sp" style="left:461.5px;top:342.34999999999997px;width:27px;height:10.73px"><div class="v" style="color:#b8b8b8;font-size:6.3px;top:1.02px">0.1</div><div class="ar" style="width:7px"></div></div>
<svg class="a" style="left:481.5px;top:342.34999999999997px" width="7" height="10.73"><rect x="1.5" y="1.77" width="4" height="3" fill="#dfe3f0"/><rect x="1.5" y="5.96" width="4" height="3" fill="#dfe3f0"/><polygon points="2.2,4.365 4.8,4.365 3.5,2.765" fill="#6878a8"/><polygon points="2.2,6.365 4.8,6.365 3.5,7.965" fill="#6878a8"/></svg>
<div class="sp" style="left:529px;top:342.34999999999997px;width:27px;height:10.73px"><div class="v" style="color:#b8b8b8;font-size:6.3px;top:1.02px">0.1</div><div class="ar" style="width:7px"></div></div>
<svg class="a" style="left:549px;top:342.34999999999997px" width="7" height="10.73"><rect x="1.5" y="1.77" width="4" height="3" fill="#dfe3f0"/><rect x="1.5" y="5.96" width="4" height="3" fill="#dfe3f0"/><polygon points="2.2,4.365 4.8,4.365 3.5,2.765" fill="#6878a8"/><polygon points="2.2,6.365 4.8,6.365 3.5,7.965" fill="#6878a8"/></svg>
<div class="sp" style="left:587px;top:342.34999999999997px;width:27px;height:10.73px"><div class="v" style="color:#b8b8b8;font-size:6.3px;top:1.02px">0.1</div><div class="ar" style="width:7px"></div></div>
<svg class="a" style="left:607px;top:342.34999999999997px" width="7" height="10.73"><rect x="1.5" y="1.77" width="4" height="3" fill="#dfe3f0"/><rect x="1.5" y="5.96" width="4" height="3" fill="#dfe3f0"/><polygon points="2.2,4.365 4.8,4.365 3.5,2.765" fill="#6878a8"/><polygon points="2.2,6.365 4.8,6.365 3.5,7.965" fill="#6878a8"/></svg>
<div class="sp" style="left:644.5px;top:342.34999999999997px;width:27px;height:10.73px"><div class="v" style="color:#b8b8b8;font-size:6.3px;top:1.02px">0.1</div><div class="ar" style="width:7px"></div></div>
<svg class="a" style="left:664.5px;top:342.34999999999997px" width="7" height="10.73"><rect x="1.5" y="1.77" width="4" height="3" fill="#dfe3f0"/><rect x="1.5" y="5.96" width="4" height="3" fill="#dfe3f0"/><polygon points="2.2,4.365 4.8,4.365 3.5,2.765" fill="#6878a8"/><polygon points="2.2,6.365 4.8,6.365 3.5,7.965" fill="#6878a8"/></svg>
<div class="sp" style="left:705.5px;top:342.34999999999997px;width:27px;height:10.73px"><div class="v" style="color:#b8b8b8;font-size:6.3px;top:1.02px">0.1</div><div class="ar" style="width:7px"></div></div>
<svg class="a" style="left:725.5px;top:342.34999999999997px" width="7" height="10.73"><rect x="1.5" y="1.77" width="4" height="3" fill="#dfe3f0"/><rect x="1.5" y="5.96" width="4" height="3" fill="#dfe3f0"/><polygon points="2.2,4.365 4.8,4.365 3.5,2.765" fill="#6878a8"/><polygon points="2.2,6.365 4.8,6.365 3.5,7.965" fill="#6878a8"/></svg>
<div class="sp" style="left:767px;top:342.34999999999997px;width:27px;height:10.73px"><div class="v" style="color:#b8b8b8;font-size:6.3px;top:1.02px">0.1</div><div class="ar" style="width:7px"></div></div>
<svg class="a" style="left:787px;top:342.34999999999997px" width="7" height="10.73"><rect x="1.5" y="1.77" width="4" height="3" fill="#dfe3f0"/><rect x="1.5" y="5.96" width="4" height="3" fill="#dfe3f0"/><polygon points="2.2,4.365 4.8,4.365 3.5,2.765" fill="#6878a8"/><polygon points="2.2,6.365 4.8,6.365 3.5,7.965" fill="#6878a8"/></svg>
<div class="sp" style="left:226.5px;top:353.28px;width:27px;height:10.73px"><div class="v" style="color:#333;font-size:6.3px;top:1.02px">40</div><div class="ar" style="width:7px"></div></div>
<svg class="a" style="left:246.5px;top:353.28px" width="7" height="10.73"><rect x="1.5" y="1.77" width="4" height="3" fill="#dfe3f0"/><rect x="1.5" y="5.96" width="4" height="3" fill="#dfe3f0"/><polygon points="2.2,4.365 4.8,4.365 3.5,2.765" fill="#6878a8"/><polygon points="2.2,6.365 4.8,6.365 3.5,7.965" fill="#6878a8"/></svg>
<div class="sp" style="left:282px;top:353.28px;width:27px;height:10.73px"><div class="v" style="color:#b8b8b8;font-size:6.3px;top:1.02px">0</div><div class="ar" style="width:7px"></div></div>
<svg class="a" style="left:302px;top:353.28px" width="7" height="10.73"><rect x="1.5" y="1.77" width="4" height="3" fill="#dfe3f0"/><rect x="1.5" y="5.96" width="4" height="3" fill="#dfe3f0"/><polygon points="2.2,4.365 4.8,4.365 3.5,2.765" fill="#6878a8"/><polygon points="2.2,6.365 4.8,6.365 3.5,7.965" fill="#6878a8"/></svg>
<div class="sp" style="left:342.5px;top:353.28px;width:27px;height:10.73px"><div class="v" style="color:#333;font-size:6.3px;top:1.02px">3</div><div class="ar" style="width:7px"></div></div>
<svg class="a" style="left:362.5px;top:353.28px" width="7" height="10.73"><rect x="1.5" y="1.77" width="4" height="3" fill="#dfe3f0"/><rect x="1.5" y="5.96" width="4" height="3" fill="#dfe3f0"/><polygon points="2.2,4.365 4.8,4.365 3.5,2.765" fill="#6878a8"/><polygon points="2.2,6.365 4.8,6.365 3.5,7.965" fill="#6878a8"/></svg>
<div class="sp" style="left:402px;top:353.28px;width:27px;height:10.73px"><div class="v" style="color:#333;font-size:6.3px;top:1.02px">10</div><div class="ar" style="width:7px"></div></div>
<svg class="a" style="left:422px;top:353.28px" width="7" height="10.73"><rect x="1.5" y="1.77" width="4" height="3" fill="#dfe3f0"/><rect x="1.5" y="5.96" width="4" height="3" fill="#dfe3f0"/><polygon points="2.2,4.365 4.8,4.365 3.5,2.765" fill="#6878a8"/><polygon points="2.2,6.365 4.8,6.365 3.5,7.965" fill="#6878a8"/></svg>
<div class="sp" style="left:461.5px;top:353.28px;width:27px;height:10.73px"><div class="v" style="color:#333;font-size:6.3px;top:1.02px">3</div><div class="ar" style="width:7px"></div></div>
<svg class="a" style="left:481.5px;top:353.28px" width="7" height="10.73"><rect x="1.5" y="1.77" width="4" height="3" fill="#dfe3f0"/><rect x="1.5" y="5.96" width="4" height="3" fill="#dfe3f0"/><polygon points="2.2,4.365 4.8,4.365 3.5,2.765" fill="#6878a8"/><polygon points="2.2,6.365 4.8,6.365 3.5,7.965" fill="#6878a8"/></svg>
<div class="sp" style="left:529px;top:353.28px;width:27px;height:10.73px"><div class="v" style="color:#333;font-size:6.3px;top:1.02px">0.1</div><div class="ar" style="width:7px"></div></div>
<svg class="a" style="left:549px;top:353.28px" width="7" height="10.73"><rect x="1.5" y="1.77" width="4" height="3" fill="#dfe3f0"/><rect x="1.5" y="5.96" width="4" height="3" fill="#dfe3f0"/><polygon points="2.2,4.365 4.8,4.365 3.5,2.765" fill="#6878a8"/><polygon points="2.2,6.365 4.8,6.365 3.5,7.965" fill="#6878a8"/></svg>
<div class="sp" style="left:587px;top:353.28px;width:27px;height:10.73px"><div class="v" style="color:#333;font-size:6.3px;top:1.02px">0.1</div><div class="ar" style="width:7px"></div></div>
<svg class="a" style="left:607px;top:353.28px" width="7" height="10.73"><rect x="1.5" y="1.77" width="4" height="3" fill="#dfe3f0"/><rect x="1.5" y="5.96" width="4" height="3" fill="#dfe3f0"/><polygon points="2.2,4.365 4.8,4.365 3.5,2.765" fill="#6878a8"/><polygon points="2.2,6.365 4.8,6.365 3.5,7.965" fill="#6878a8"/></svg>
<div class="sp" style="left:644.5px;top:353.28px;width:27px;height:10.73px"><div class="v" style="color:#333;font-size:6.3px;top:1.02px">0.1</div><div class="ar" style="width:7px"></div></div>
<svg class="a" style="left:664.5px;top:353.28px" width="7" height="10.73"><rect x="1.5" y="1.77" width="4" height="3" fill="#dfe3f0"/><rect x="1.5" y="5.96" width="4" height="3" fill="#dfe3f0"/><polygon points="2.2,4.365 4.8,4.365 3.5,2.765" fill="#6878a8"/><polygon points="2.2,6.365 4.8,6.365 3.5,7.965" fill="#6878a8"/></svg>
<div class="sp" style="left:705.5px;top:353.28px;width:27px;height:10.73px"><div class="v" style="color:#333;font-size:6.3px;top:1.02px">0.1</div><div class="ar" style="width:7px"></div></div>
<svg class="a" style="left:725.5px;top:353.28px" width="7" height="10.73"><rect x="1.5" y="1.77" width="4" height="3" fill="#dfe3f0"/><rect x="1.5" y="5.96" width="4" height="3" fill="#dfe3f0"/><polygon points="2.2,4.365 4.8,4.365 3.5,2.765" fill="#6878a8"/><polygon points="2.2,6.365 4.8,6.365 3.5,7.965" fill="#6878a8"/></svg>
<div class="sp" style="left:767px;top:353.28px;width:27px;height:10.73px"><div class="v" style="color:#333;font-size:6.3px;top:1.02px">0.1</div><div class="ar" style="width:7px"></div></div>
<svg class="a" style="left:787px;top:353.28px" width="7" height="10.73"><rect x="1.5" y="1.77" width="4" height="3" fill="#dfe3f0"/><rect x="1.5" y="5.96" width="4" height="3" fill="#dfe3f0"/><polygon points="2.2,4.365 4.8,4.365 3.5,2.765" fill="#6878a8"/><polygon points="2.2,6.365 4.8,6.365 3.5,7.965" fill="#6878a8"/></svg>
<div class="sp" style="left:226.5px;top:386.07px;width:27px;height:10.73px"><div class="v" style="color:#333;font-size:6.3px;top:1.02px">0.5</div><div class="ar" style="width:7px"></div></div>
<svg class="a" style="left:246.5px;top:386.07px" width="7" height="10.73"><rect x="1.5" y="1.77" width="4" height="3" fill="#dfe3f0"/><rect x="1.5" y="5.96" width="4" height="3" fill="#dfe3f0"/><polygon points="2.2,4.365 4.8,4.365 3.5,2.765" fill="#6878a8"/><polygon points="2.2,6.365 4.8,6.365 3.5,7.965" fill="#6878a8"/></svg>
<div class="sp" style="left:282px;top:386.07px;width:27px;height:10.73px"><div class="v" style="color:#333;font-size:6.3px;top:1.02px">0.8</div><div class="ar" style="width:7px"></div></div>
<svg class="a" style="left:302px;top:386.07px" width="7" height="10.73"><rect x="1.5" y="1.77" width="4" height="3" fill="#dfe3f0"/><rect x="1.5" y="5.96" width="4" height="3" fill="#dfe3f0"/><polygon points="2.2,4.365 4.8,4.365 3.5,2.765" fill="#6878a8"/><polygon points="2.2,6.365 4.8,6.365 3.5,7.965" fill="#6878a8"/></svg>
<div class="sp" style="left:342.5px;top:386.07px;width:27px;height:10.73px"><div class="v" style="color:#333;font-size:6.3px;top:1.02px">0.8</div><div class="ar" style="width:7px"></div></div>
<svg class="a" style="left:362.5px;top:386.07px" width="7" height="10.73"><rect x="1.5" y="1.77" width="4" height="3" fill="#dfe3f0"/><rect x="1.5" y="5.96" width="4" height="3" fill="#dfe3f0"/><polygon points="2.2,4.365 4.8,4.365 3.5,2.765" fill="#6878a8"/><polygon points="2.2,6.365 4.8,6.365 3.5,7.965" fill="#6878a8"/></svg>
<div class="sp" style="left:402px;top:386.07px;width:27px;height:10.73px"><div class="v" style="color:#333;font-size:6.3px;top:1.02px">0.188</div><div class="ar" style="width:7px"></div></div>
<svg class="a" style="left:422px;top:386.07px" width="7" height="10.73"><rect x="1.5" y="1.77" width="4" height="3" fill="#dfe3f0"/><rect x="1.5" y="5.96" width="4" height="3" fill="#dfe3f0"/><polygon points="2.2,4.365 4.8,4.365 3.5,2.765" fill="#6878a8"/><polygon points="2.2,6.365 4.8,6.365 3.5,7.965" fill="#6878a8"/></svg>
<div class="sp" style="left:461.5px;top:386.07px;width:27px;height:10.73px"><div class="v" style="color:#333;font-size:6.3px;top:1.02px">0.188</div><div class="ar" style="width:7px"></div></div>
<svg class="a" style="left:481.5px;top:386.07px" width="7" height="10.73"><rect x="1.5" y="1.77" width="4" height="3" fill="#dfe3f0"/><rect x="1.5" y="5.96" width="4" height="3" fill="#dfe3f0"/><polygon points="2.2,4.365 4.8,4.365 3.5,2.765" fill="#6878a8"/><polygon points="2.2,6.365 4.8,6.365 3.5,7.965" fill="#6878a8"/></svg>
<div class="sp" style="left:529px;top:386.07px;width:27px;height:10.73px"><div class="v" style="color:#333;font-size:6.3px;top:1.02px">0</div><div class="ar" style="width:7px"></div></div>
<svg class="a" style="left:549px;top:386.07px" width="7" height="10.73"><rect x="1.5" y="1.77" width="4" height="3" fill="#dfe3f0"/><rect x="1.5" y="5.96" width="4" height="3" fill="#dfe3f0"/><polygon points="2.2,4.365 4.8,4.365 3.5,2.765" fill="#6878a8"/><polygon points="2.2,6.365 4.8,6.365 3.5,7.965" fill="#6878a8"/></svg>
<div class="sp" style="left:587px;top:386.07px;width:27px;height:10.73px"><div class="v" style="color:#333;font-size:6.3px;top:1.02px">0</div><div class="ar" style="width:7px"></div></div>
<svg class="a" style="left:607px;top:386.07px" width="7" height="10.73"><rect x="1.5" y="1.77" width="4" height="3" fill="#dfe3f0"/><rect x="1.5" y="5.96" width="4" height="3" fill="#dfe3f0"/><polygon points="2.2,4.365 4.8,4.365 3.5,2.765" fill="#6878a8"/><polygon points="2.2,6.365 4.8,6.365 3.5,7.965" fill="#6878a8"/></svg>
<div class="sp" style="left:644.5px;top:386.07px;width:27px;height:10.73px"><div class="v" style="color:#333;font-size:6.3px;top:1.02px">0</div><div class="ar" style="width:7px"></div></div>
<svg class="a" style="left:664.5px;top:386.07px" width="7" height="10.73"><rect x="1.5" y="1.77" width="4" height="3" fill="#dfe3f0"/><rect x="1.5" y="5.96" width="4" height="3" fill="#dfe3f0"/><polygon points="2.2,4.365 4.8,4.365 3.5,2.765" fill="#6878a8"/><polygon points="2.2,6.365 4.8,6.365 3.5,7.965" fill="#6878a8"/></svg>
<div class="sp" style="left:705.5px;top:386.07px;width:27px;height:10.73px"><div class="v" style="color:#333;font-size:6.3px;top:1.02px">0</div><div class="ar" style="width:7px"></div></div>
<svg class="a" style="left:725.5px;top:386.07px" width="7" height="10.73"><rect x="1.5" y="1.77" width="4" height="3" fill="#dfe3f0"/><rect x="1.5" y="5.96" width="4" height="3" fill="#dfe3f0"/><polygon points="2.2,4.365 4.8,4.365 3.5,2.765" fill="#6878a8"/><polygon points="2.2,6.365 4.8,6.365 3.5,7.965" fill="#6878a8"/></svg>
<div class="sp" style="left:767px;top:386.07px;width:27px;height:10.73px"><div class="v" style="color:#333;font-size:6.3px;top:1.02px">0</div><div class="ar" style="width:7px"></div></div>
<svg class="a" style="left:787px;top:386.07px" width="7" height="10.73"><rect x="1.5" y="1.77" width="4" height="3" fill="#dfe3f0"/><rect x="1.5" y="5.96" width="4" height="3" fill="#dfe3f0"/><polygon points="2.2,4.365 4.8,4.365 3.5,2.765" fill="#6878a8"/><polygon points="2.2,6.365 4.8,6.365 3.5,7.965" fill="#6878a8"/></svg>
<div class="sp" style="left:226.5px;top:397.0px;width:27px;height:10.73px"><div class="v" style="color:#333;font-size:6.3px;top:1.02px">0.1</div><div class="ar" style="width:7px"></div></div>
<svg class="a" style="left:246.5px;top:397.0px" width="7" height="10.73"><rect x="1.5" y="1.77" width="4" height="3" fill="#dfe3f0"/><rect x="1.5" y="5.96" width="4" height="3" fill="#dfe3f0"/><polygon points="2.2,4.365 4.8,4.365 3.5,2.765" fill="#6878a8"/><polygon points="2.2,6.365 4.8,6.365 3.5,7.965" fill="#6878a8"/></svg>
<div class="sp" style="left:282px;top:397.0px;width:27px;height:10.73px"><div class="v" style="color:#b8b8b8;font-size:6.3px;top:1.02px">0.188</div><div class="ar" style="width:7px"></div></div>
<svg class="a" style="left:302px;top:397.0px" width="7" height="10.73"><rect x="1.5" y="1.77" width="4" height="3" fill="#dfe3f0"/><rect x="1.5" y="5.96" width="4" height="3" fill="#dfe3f0"/><polygon points="2.2,4.365 4.8,4.365 3.5,2.765" fill="#6878a8"/><polygon points="2.2,6.365 4.8,6.365 3.5,7.965" fill="#6878a8"/></svg>
<div class="sp" style="left:342.5px;top:397.0px;width:27px;height:10.73px"><div class="v" style="color:#b8b8b8;font-size:6.3px;top:1.02px">0.188</div><div class="ar" style="width:7px"></div></div>
<svg class="a" style="left:362.5px;top:397.0px" width="7" height="10.73"><rect x="1.5" y="1.77" width="4" height="3" fill="#dfe3f0"/><rect x="1.5" y="5.96" width="4" height="3" fill="#dfe3f0"/><polygon points="2.2,4.365 4.8,4.365 3.5,2.765" fill="#6878a8"/><polygon points="2.2,6.365 4.8,6.365 3.5,7.965" fill="#6878a8"/></svg>
<div class="sp" style="left:402px;top:397.0px;width:27px;height:10.73px"><div class="v" style="color:#b8b8b8;font-size:6.3px;top:1.02px">0.5</div><div class="ar" style="width:7px"></div></div>
<svg class="a" style="left:422px;top:397.0px" width="7" height="10.73"><rect x="1.5" y="1.77" width="4" height="3" fill="#dfe3f0"/><rect x="1.5" y="5.96" width="4" height="3" fill="#dfe3f0"/><polygon points="2.2,4.365 4.8,4.365 3.5,2.765" fill="#6878a8"/><polygon points="2.2,6.365 4.8,6.365 3.5,7.965" fill="#6878a8"/></svg>
<div class="sp" style="left:461.5px;top:397.0px;width:27px;height:10.73px"><div class="v" style="color:#333;font-size:6.3px;top:1.02px">0.5</div><div class="ar" style="width:7px"></div></div>
<svg class="a" style="left:481.5px;top:397.0px" width="7" height="10.73"><rect x="1.5" y="1.77" width="4" height="3" fill="#dfe3f0"/><rect x="1.5" y="5.96" width="4" height="3" fill="#dfe3f0"/><polygon points="2.2,4.365 4.8,4.365 3.5,2.765" fill="#6878a8"/><polygon points="2.2,6.365 4.8,6.365 3.5,7.965" fill="#6878a8"/></svg>
<div class="sp" style="left:529px;top:397.0px;width:27px;height:10.73px"><div class="v" style="color:#b8b8b8;font-size:6.3px;top:1.02px">0.1</div><div class="ar" style="width:7px"></div></div>
<svg class="a" style="left:549px;top:397.0px" width="7" height="10.73"><rect x="1.5" y="1.77" width="4" height="3" fill="#dfe3f0"/><rect x="1.5" y="5.96" width="4" height="3" fill="#dfe3f0"/><polygon points="2.2,4.365 4.8,4.365 3.5,2.765" fill="#6878a8"/><polygon points="2.2,6.365 4.8,6.365 3.5,7.965" fill="#6878a8"/></svg>
<div class="sp" style="left:587px;top:397.0px;width:27px;height:10.73px"><div class="v" style="color:#b8b8b8;font-size:6.3px;top:1.02px">0.1</div><div class="ar" style="width:7px"></div></div>
<svg class="a" style="left:607px;top:397.0px" width="7" height="10.73"><rect x="1.5" y="1.77" width="4" height="3" fill="#dfe3f0"/><rect x="1.5" y="5.96" width="4" height="3" fill="#dfe3f0"/><polygon points="2.2,4.365 4.8,4.365 3.5,2.765" fill="#6878a8"/><polygon points="2.2,6.365 4.8,6.365 3.5,7.965" fill="#6878a8"/></svg>
<div class="sp" style="left:644.5px;top:397.0px;width:27px;height:10.73px"><div class="v" style="color:#b8b8b8;font-size:6.3px;top:1.02px">0.1</div><div class="ar" style="width:7px"></div></div>
<svg class="a" style="left:664.5px;top:397.0px" width="7" height="10.73"><rect x="1.5" y="1.77" width="4" height="3" fill="#dfe3f0"/><rect x="1.5" y="5.96" width="4" height="3" fill="#dfe3f0"/><polygon points="2.2,4.365 4.8,4.365 3.5,2.765" fill="#6878a8"/><polygon points="2.2,6.365 4.8,6.365 3.5,7.965" fill="#6878a8"/></svg>
<div class="sp" style="left:705.5px;top:397.0px;width:27px;height:10.73px"><div class="v" style="color:#b8b8b8;font-size:6.3px;top:1.02px">0.1</div><div class="ar" style="width:7px"></div></div>
<svg class="a" style="left:725.5px;top:397.0px" width="7" height="10.73"><rect x="1.5" y="1.77" width="4" height="3" fill="#dfe3f0"/><rect x="1.5" y="5.96" width="4" height="3" fill="#dfe3f0"/><polygon points="2.2,4.365 4.8,4.365 3.5,2.765" fill="#6878a8"/><polygon points="2.2,6.365 4.8,6.365 3.5,7.965" fill="#6878a8"/></svg>
<div class="sp" style="left:767px;top:397.0px;width:27px;height:10.73px"><div class="v" style="color:#b8b8b8;font-size:6.3px;top:1.02px">0.1</div><div class="ar" style="width:7px"></div></div>
<svg class="a" style="left:787px;top:397.0px" width="7" height="10.73"><rect x="1.5" y="1.77" width="4" height="3" fill="#dfe3f0"/><rect x="1.5" y="5.96" width="4" height="3" fill="#dfe3f0"/><polygon points="2.2,4.365 4.8,4.365 3.5,2.765" fill="#6878a8"/><polygon points="2.2,6.365 4.8,6.365 3.5,7.965" fill="#6878a8"/></svg>
<div class="sp" style="left:226.5px;top:407.93px;width:27px;height:10.73px"><div class="v" style="color:#333;font-size:6.3px;top:1.02px">0.1</div><div class="ar" style="width:7px"></div></div>
<svg class="a" style="left:246.5px;top:407.93px" width="7" height="10.73"><rect x="1.5" y="1.77" width="4" height="3" fill="#dfe3f0"/><rect x="1.5" y="5.96" width="4" height="3" fill="#dfe3f0"/><polygon points="2.2,4.365 4.8,4.365 3.5,2.765" fill="#6878a8"/><polygon points="2.2,6.365 4.8,6.365 3.5,7.965" fill="#6878a8"/></svg>
<div class="sp" style="left:282px;top:407.93px;width:27px;height:10.73px"><div class="v" style="color:#b8b8b8;font-size:6.3px;top:1.02px">0</div><div class="ar" style="width:7px"></div></div>
<svg class="a" style="left:302px;top:407.93px" width="7" height="10.73"><rect x="1.5" y="1.77" width="4" height="3" fill="#dfe3f0"/><rect x="1.5" y="5.96" width="4" height="3" fill="#dfe3f0"/><polygon points="2.2,4.365 4.8,4.365 3.5,2.765" fill="#6878a8"/><polygon points="2.2,6.365 4.8,6.365 3.5,7.965" fill="#6878a8"/></svg>
<div class="sp" style="left:342.5px;top:407.93px;width:27px;height:10.73px"><div class="v" style="color:#b8b8b8;font-size:6.3px;top:1.02px">0.5</div><div class="ar" style="width:7px"></div></div>
<svg class="a" style="left:362.5px;top:407.93px" width="7" height="10.73"><rect x="1.5" y="1.77" width="4" height="3" fill="#dfe3f0"/><rect x="1.5" y="5.96" width="4" height="3" fill="#dfe3f0"/><polygon points="2.2,4.365 4.8,4.365 3.5,2.765" fill="#6878a8"/><polygon points="2.2,6.365 4.8,6.365 3.5,7.965" fill="#6878a8"/></svg>
<div class="sp" style="left:402px;top:407.93px;width:27px;height:10.73px"><div class="v" style="color:#b8b8b8;font-size:6.3px;top:1.02px">0.1</div><div class="ar" style="width:7px"></div></div>
<svg class="a" style="left:422px;top:407.93px" width="7" height="10.73"><rect x="1.5" y="1.77" width="4" height="3" fill="#dfe3f0"/><rect x="1.5" y="5.96" width="4" height="3" fill="#dfe3f0"/><polygon points="2.2,4.365 4.8,4.365 3.5,2.765" fill="#6878a8"/><polygon points="2.2,6.365 4.8,6.365 3.5,7.965" fill="#6878a8"/></svg>
<div class="sp" style="left:461.5px;top:407.93px;width:27px;height:10.73px"><div class="v" style="color:#b8b8b8;font-size:6.3px;top:1.02px">0.1</div><div class="ar" style="width:7px"></div></div>
<svg class="a" style="left:481.5px;top:407.93px" width="7" height="10.73"><rect x="1.5" y="1.77" width="4" height="3" fill="#dfe3f0"/><rect x="1.5" y="5.96" width="4" height="3" fill="#dfe3f0"/><polygon points="2.2,4.365 4.8,4.365 3.5,2.765" fill="#6878a8"/><polygon points="2.2,6.365 4.8,6.365 3.5,7.965" fill="#6878a8"/></svg>
<div class="sp" style="left:529px;top:407.93px;width:27px;height:10.73px"><div class="v" style="color:#333;font-size:6.3px;top:1.02px">0.1</div><div class="ar" style="width:7px"></div></div>
<svg class="a" style="left:549px;top:407.93px" width="7" height="10.73"><rect x="1.5" y="1.77" width="4" height="3" fill="#dfe3f0"/><rect x="1.5" y="5.96" width="4" height="3" fill="#dfe3f0"/><polygon points="2.2,4.365 4.8,4.365 3.5,2.765" fill="#6878a8"/><polygon points="2.2,6.365 4.8,6.365 3.5,7.965" fill="#6878a8"/></svg>
<div class="sp" style="left:587px;top:407.93px;width:27px;height:10.73px"><div class="v" style="color:#333;font-size:6.3px;top:1.02px">0.1</div><div class="ar" style="width:7px"></div></div>
<svg class="a" style="left:607px;top:407.93px" width="7" height="10.73"><rect x="1.5" y="1.77" width="4" height="3" fill="#dfe3f0"/><rect x="1.5" y="5.96" width="4" height="3" fill="#dfe3f0"/><polygon points="2.2,4.365 4.8,4.365 3.5,2.765" fill="#6878a8"/><polygon points="2.2,6.365 4.8,6.365 3.5,7.965" fill="#6878a8"/></svg>
<div class="sp" style="left:644.5px;top:407.93px;width:27px;height:10.73px"><div class="v" style="color:#333;font-size:6.3px;top:1.02px">0.1</div><div class="ar" style="width:7px"></div></div>
<svg class="a" style="left:664.5px;top:407.93px" width="7" height="10.73"><rect x="1.5" y="1.77" width="4" height="3" fill="#dfe3f0"/><rect x="1.5" y="5.96" width="4" height="3" fill="#dfe3f0"/><polygon points="2.2,4.365 4.8,4.365 3.5,2.765" fill="#6878a8"/><polygon points="2.2,6.365 4.8,6.365 3.5,7.965" fill="#6878a8"/></svg>
<div class="sp" style="left:705.5px;top:407.93px;width:27px;height:10.73px"><div class="v" style="color:#333;font-size:6.3px;top:1.02px">0.1</div><div class="ar" style="width:7px"></div></div>
<svg class="a" style="left:725.5px;top:407.93px" width="7" height="10.73"><rect x="1.5" y="1.77" width="4" height="3" fill="#dfe3f0"/><rect x="1.5" y="5.96" width="4" height="3" fill="#dfe3f0"/><polygon points="2.2,4.365 4.8,4.365 3.5,2.765" fill="#6878a8"/><polygon points="2.2,6.365 4.8,6.365 3.5,7.965" fill="#6878a8"/></svg>
<div class="sp" style="left:767px;top:407.93px;width:27px;height:10.73px"><div class="v" style="color:#333;font-size:6.3px;top:1.02px">0.1</div><div class="ar" style="width:7px"></div></div>
<svg class="a" style="left:787px;top:407.93px" width="7" height="10.73"><rect x="1.5" y="1.77" width="4" height="3" fill="#dfe3f0"/><rect x="1.5" y="5.96" width="4" height="3" fill="#dfe3f0"/><polygon points="2.2,4.365 4.8,4.365 3.5,2.765" fill="#6878a8"/><polygon points="2.2,6.365 4.8,6.365 3.5,7.965" fill="#6878a8"/></svg>
<div class="sp" style="left:226.5px;top:429.79px;width:27px;height:10.73px"><div class="v" style="color:#333;font-size:6.3px;top:1.02px">50</div><div class="ar" style="width:7px"></div></div>
<svg class="a" style="left:246.5px;top:429.79px" width="7" height="10.73"><rect x="1.5" y="1.77" width="4" height="3" fill="#dfe3f0"/><rect x="1.5" y="5.96" width="4" height="3" fill="#dfe3f0"/><polygon points="2.2,4.365 4.8,4.365 3.5,2.765" fill="#6878a8"/><polygon points="2.2,6.365 4.8,6.365 3.5,7.965" fill="#6878a8"/></svg>
<div class="sp" style="left:282px;top:429.79px;width:27px;height:10.73px"><div class="v" style="color:#333;font-size:6.3px;top:1.02px">15</div><div class="ar" style="width:7px"></div></div>
<svg class="a" style="left:302px;top:429.79px" width="7" height="10.73"><rect x="1.5" y="1.77" width="4" height="3" fill="#dfe3f0"/><rect x="1.5" y="5.96" width="4" height="3" fill="#dfe3f0"/><polygon points="2.2,4.365 4.8,4.365 3.5,2.765" fill="#6878a8"/><polygon points="2.2,6.365 4.8,6.365 3.5,7.965" fill="#6878a8"/></svg>
<div class="sp" style="left:342.5px;top:429.79px;width:27px;height:10.73px"><div class="v" style="color:#333;font-size:6.3px;top:1.02px">15</div><div class="ar" style="width:7px"></div></div>
<svg class="a" style="left:362.5px;top:429.79px" width="7" height="10.73"><rect x="1.5" y="1.77" width="4" height="3" fill="#dfe3f0"/><rect x="1.5" y="5.96" width="4" height="3" fill="#dfe3f0"/><polygon points="2.2,4.365 4.8,4.365 3.5,2.765" fill="#6878a8"/><polygon points="2.2,6.365 4.8,6.365 3.5,7.965" fill="#6878a8"/></svg>
<div class="sp" style="left:402px;top:429.79px;width:27px;height:10.73px"><div class="v" style="color:#333;font-size:6.3px;top:1.02px">15</div><div class="ar" style="width:7px"></div></div>
<svg class="a" style="left:422px;top:429.79px" width="7" height="10.73"><rect x="1.5" y="1.77" width="4" height="3" fill="#dfe3f0"/><rect x="1.5" y="5.96" width="4" height="3" fill="#dfe3f0"/><polygon points="2.2,4.365 4.8,4.365 3.5,2.765" fill="#6878a8"/><polygon points="2.2,6.365 4.8,6.365 3.5,7.965" fill="#6878a8"/></svg>
<div class="sp" style="left:461.5px;top:429.79px;width:27px;height:10.73px"><div class="v" style="color:#333;font-size:6.3px;top:1.02px">40</div><div class="ar" style="width:7px"></div></div>
<svg class="a" style="left:481.5px;top:429.79px" width="7" height="10.73"><rect x="1.5" y="1.77" width="4" height="3" fill="#dfe3f0"/><rect x="1.5" y="5.96" width="4" height="3" fill="#dfe3f0"/><polygon points="2.2,4.365 4.8,4.365 3.5,2.765" fill="#6878a8"/><polygon points="2.2,6.365 4.8,6.365 3.5,7.965" fill="#6878a8"/></svg>
<div class="sp" style="left:529px;top:429.79px;width:27px;height:10.73px"><div class="v" style="color:#333;font-size:6.3px;top:1.02px">0.1</div><div class="ar" style="width:7px"></div></div>
<svg class="a" style="left:549px;top:429.79px" width="7" height="10.73"><rect x="1.5" y="1.77" width="4" height="3" fill="#dfe3f0"/><rect x="1.5" y="5.96" width="4" height="3" fill="#dfe3f0"/><polygon points="2.2,4.365 4.8,4.365 3.5,2.765" fill="#6878a8"/><polygon points="2.2,6.365 4.8,6.365 3.5,7.965" fill="#6878a8"/></svg>
<div class="sp" style="left:587px;top:429.79px;width:27px;height:10.73px"><div class="v" style="color:#333;font-size:6.3px;top:1.02px">0.1</div><div class="ar" style="width:7px"></div></div>
<svg class="a" style="left:607px;top:429.79px" width="7" height="10.73"><rect x="1.5" y="1.77" width="4" height="3" fill="#dfe3f0"/><rect x="1.5" y="5.96" width="4" height="3" fill="#dfe3f0"/><polygon points="2.2,4.365 4.8,4.365 3.5,2.765" fill="#6878a8"/><polygon points="2.2,6.365 4.8,6.365 3.5,7.965" fill="#6878a8"/></svg>
<div class="sp" style="left:644.5px;top:429.79px;width:27px;height:10.73px"><div class="v" style="color:#333;font-size:6.3px;top:1.02px">0.1</div><div class="ar" style="width:7px"></div></div>
<svg class="a" style="left:664.5px;top:429.79px" width="7" height="10.73"><rect x="1.5" y="1.77" width="4" height="3" fill="#dfe3f0"/><rect x="1.5" y="5.96" width="4" height="3" fill="#dfe3f0"/><polygon points="2.2,4.365 4.8,4.365 3.5,2.765" fill="#6878a8"/><polygon points="2.2,6.365 4.8,6.365 3.5,7.965" fill="#6878a8"/></svg>
<div class="sp" style="left:705.5px;top:429.79px;width:27px;height:10.73px"><div class="v" style="color:#333;font-size:6.3px;top:1.02px">0.1</div><div class="ar" style="width:7px"></div></div>
<svg class="a" style="left:725.5px;top:429.79px" width="7" height="10.73"><rect x="1.5" y="1.77" width="4" height="3" fill="#dfe3f0"/><rect x="1.5" y="5.96" width="4" height="3" fill="#dfe3f0"/><polygon points="2.2,4.365 4.8,4.365 3.5,2.765" fill="#6878a8"/><polygon points="2.2,6.365 4.8,6.365 3.5,7.965" fill="#6878a8"/></svg>
<div class="sp" style="left:767px;top:429.79px;width:27px;height:10.73px"><div class="v" style="color:#333;font-size:6.3px;top:1.02px">0.1</div><div class="ar" style="width:7px"></div></div>
<svg class="a" style="left:787px;top:429.79px" width="7" height="10.73"><rect x="1.5" y="1.77" width="4" height="3" fill="#dfe3f0"/><rect x="1.5" y="5.96" width="4" height="3" fill="#dfe3f0"/><polygon points="2.2,4.365 4.8,4.365 3.5,2.765" fill="#6878a8"/><polygon points="2.2,6.365 4.8,6.365 3.5,7.965" fill="#6878a8"/></svg>
<div class="sp" style="left:226.5px;top:440.71999999999997px;width:27px;height:10.73px"><div class="v" style="color:#333;font-size:6.3px;top:1.02px">100</div><div class="ar" style="width:7px"></div></div>
<svg class="a" style="left:246.5px;top:440.71999999999997px" width="7" height="10.73"><rect x="1.5" y="1.77" width="4" height="3" fill="#dfe3f0"/><rect x="1.5" y="5.96" width="4" height="3" fill="#dfe3f0"/><polygon points="2.2,4.365 4.8,4.365 3.5,2.765" fill="#6878a8"/><polygon points="2.2,6.365 4.8,6.365 3.5,7.965" fill="#6878a8"/></svg>
<div class="sp" style="left:282px;top:440.71999999999997px;width:27px;height:10.73px"><div class="v" style="color:#333;font-size:6.3px;top:1.02px">120</div><div class="ar" style="width:7px"></div></div>
<svg class="a" style="left:302px;top:440.71999999999997px" width="7" height="10.73"><rect x="1.5" y="1.77" width="4" height="3" fill="#dfe3f0"/><rect x="1.5" y="5.96" width="4" height="3" fill="#dfe3f0"/><polygon points="2.2,4.365 4.8,4.365 3.5,2.765" fill="#6878a8"/><polygon points="2.2,6.365 4.8,6.365 3.5,7.965" fill="#6878a8"/></svg>
<div class="sp" style="left:342.5px;top:440.71999999999997px;width:27px;height:10.73px"><div class="v" style="color:#333;font-size:6.3px;top:1.02px">80</div><div class="ar" style="width:7px"></div></div>
<svg class="a" style="left:362.5px;top:440.71999999999997px" width="7" height="10.73"><rect x="1.5" y="1.77" width="4" height="3" fill="#dfe3f0"/><rect x="1.5" y="5.96" width="4" height="3" fill="#dfe3f0"/><polygon points="2.2,4.365 4.8,4.365 3.5,2.765" fill="#6878a8"/><polygon points="2.2,6.365 4.8,6.365 3.5,7.965" fill="#6878a8"/></svg>
<div class="sp" style="left:402px;top:440.71999999999997px;width:27px;height:10.73px"><div class="v" style="color:#333;font-size:6.3px;top:1.02px">190</div><div class="ar" style="width:7px"></div></div>
<svg class="a" style="left:422px;top:440.71999999999997px" width="7" height="10.73"><rect x="1.5" y="1.77" width="4" height="3" fill="#dfe3f0"/><rect x="1.5" y="5.96" width="4" height="3" fill="#dfe3f0"/><polygon points="2.2,4.365 4.8,4.365 3.5,2.765" fill="#6878a8"/><polygon points="2.2,6.365 4.8,6.365 3.5,7.965" fill="#6878a8"/></svg>
<div class="sp" style="left:461.5px;top:440.71999999999997px;width:27px;height:10.73px"><div class="v" style="color:#333;font-size:6.3px;top:1.02px">190</div><div class="ar" style="width:7px"></div></div>
<svg class="a" style="left:481.5px;top:440.71999999999997px" width="7" height="10.73"><rect x="1.5" y="1.77" width="4" height="3" fill="#dfe3f0"/><rect x="1.5" y="5.96" width="4" height="3" fill="#dfe3f0"/><polygon points="2.2,4.365 4.8,4.365 3.5,2.765" fill="#6878a8"/><polygon points="2.2,6.365 4.8,6.365 3.5,7.965" fill="#6878a8"/></svg>
<div class="sp" style="left:529px;top:440.71999999999997px;width:27px;height:10.73px"><div class="v" style="color:#333;font-size:6.3px;top:1.02px">0.1</div><div class="ar" style="width:7px"></div></div>
<svg class="a" style="left:549px;top:440.71999999999997px" width="7" height="10.73"><rect x="1.5" y="1.77" width="4" height="3" fill="#dfe3f0"/><rect x="1.5" y="5.96" width="4" height="3" fill="#dfe3f0"/><polygon points="2.2,4.365 4.8,4.365 3.5,2.765" fill="#6878a8"/><polygon points="2.2,6.365 4.8,6.365 3.5,7.965" fill="#6878a8"/></svg>
<div class="sp" style="left:587px;top:440.71999999999997px;width:27px;height:10.73px"><div class="v" style="color:#333;font-size:6.3px;top:1.02px">0.1</div><div class="ar" style="width:7px"></div></div>
<svg class="a" style="left:607px;top:440.71999999999997px" width="7" height="10.73"><rect x="1.5" y="1.77" width="4" height="3" fill="#dfe3f0"/><rect x="1.5" y="5.96" width="4" height="3" fill="#dfe3f0"/><polygon points="2.2,4.365 4.8,4.365 3.5,2.765" fill="#6878a8"/><polygon points="2.2,6.365 4.8,6.365 3.5,7.965" fill="#6878a8"/></svg>
<div class="sp" style="left:644.5px;top:440.71999999999997px;width:27px;height:10.73px"><div class="v" style="color:#333;font-size:6.3px;top:1.02px">0.1</div><div class="ar" style="width:7px"></div></div>
<svg class="a" style="left:664.5px;top:440.71999999999997px" width="7" height="10.73"><rect x="1.5" y="1.77" width="4" height="3" fill="#dfe3f0"/><rect x="1.5" y="5.96" width="4" height="3" fill="#dfe3f0"/><polygon points="2.2,4.365 4.8,4.365 3.5,2.765" fill="#6878a8"/><polygon points="2.2,6.365 4.8,6.365 3.5,7.965" fill="#6878a8"/></svg>
<div class="sp" style="left:705.5px;top:440.71999999999997px;width:27px;height:10.73px"><div class="v" style="color:#333;font-size:6.3px;top:1.02px">0.1</div><div class="ar" style="width:7px"></div></div>
<svg class="a" style="left:725.5px;top:440.71999999999997px" width="7" height="10.73"><rect x="1.5" y="1.77" width="4" height="3" fill="#dfe3f0"/><rect x="1.5" y="5.96" width="4" height="3" fill="#dfe3f0"/><polygon points="2.2,4.365 4.8,4.365 3.5,2.765" fill="#6878a8"/><polygon points="2.2,6.365 4.8,6.365 3.5,7.965" fill="#6878a8"/></svg>
<div class="sp" style="left:767px;top:440.71999999999997px;width:27px;height:10.73px"><div class="v" style="color:#333;font-size:6.3px;top:1.02px">0.1</div><div class="ar" style="width:7px"></div></div>
<svg class="a" style="left:787px;top:440.71999999999997px" width="7" height="10.73"><rect x="1.5" y="1.77" width="4" height="3" fill="#dfe3f0"/><rect x="1.5" y="5.96" width="4" height="3" fill="#dfe3f0"/><polygon points="2.2,4.365 4.8,4.365 3.5,2.765" fill="#6878a8"/><polygon points="2.2,6.365 4.8,6.365 3.5,7.965" fill="#6878a8"/></svg>
<div class="a" style="left:202.0px;top:320.39px;width:51px;height:10px;background:#f4f4f4;border:1px solid #d0d0d0"></div>
<div class="t" style="left:204.0px;top:322.39px;font-size:5.5px;color:#bbb">自动加速_续乘</div>
<div class="a" style="left:245.0px;top:321.39px;width:7px;height:8px;background:#e4e4e4;border:1px solid #c0c0c0"></div>
<svg class="a" style="left:247.0px;top:324.39px" width="4" height="3"><polygon points="0,0 4,0 2,2.5" fill="#222"/></svg>
<div class="a" style="left:202.0px;top:375.84px;width:51px;height:10px;background:#f4f4f4;border:1px solid #d0d0d0"></div>
<div class="t" style="left:204.0px;top:377.84px;font-size:5.5px;color:#bbb">匀速_速度</div>
<div class="a" style="left:245.0px;top:376.84px;width:7px;height:8px;background:#e4e4e4;border:1px solid #c0c0c0"></div>
<svg class="a" style="left:247.0px;top:379.84px" width="4" height="3"><polygon points="0,0 4,0 2,2.5" fill="#222"/></svg>
<div class="a" style="left:257.5px;top:320.39px;width:51px;height:10px;background:#fff;border:1px solid #d0d0d0"></div>
<div class="t" style="left:259.5px;top:322.39px;font-size:5.5px;color:#333">匀速_时间_速度</div>
<div class="a" style="left:300.5px;top:321.39px;width:7px;height:8px;background:#e4e4e4;border:1px solid #c0c0c0"></div>
<svg class="a" style="left:302.5px;top:324.39px" width="4" height="3"><polygon points="0,0 4,0 2,2.5" fill="#222"/></svg>
<div class="a" style="left:257.5px;top:375.84px;width:51px;height:10px;background:#fff;border:1px solid #d0d0d0"></div>
<div class="t" style="left:259.5px;top:377.84px;font-size:5.5px;color:#333">匀速_速度</div>
<div class="a" style="left:300.5px;top:376.84px;width:7px;height:8px;background:#e4e4e4;border:1px solid #c0c0c0"></div>
<svg class="a" style="left:302.5px;top:379.84px" width="4" height="3"><polygon points="0,0 4,0 2,2.5" fill="#222"/></svg>
<div class="a" style="left:318.0px;top:320.39px;width:51px;height:10px;background:#fff;border:1px solid #d0d0d0"></div>
<div class="t" style="left:320.0px;top:322.39px;font-size:5.5px;color:#333">自动加速_续乘</div>
<div class="a" style="left:361.0px;top:321.39px;width:7px;height:8px;background:#e4e4e4;border:1px solid #c0c0c0"></div>
<svg class="a" style="left:363.0px;top:324.39px" width="4" height="3"><polygon points="0,0 4,0 2,2.5" fill="#222"/></svg>
<div class="a" style="left:318.0px;top:375.84px;width:51px;height:10px;background:#fff;border:1px solid #d0d0d0"></div>
<div class="t" style="left:320.0px;top:377.84px;font-size:5.5px;color:#333">匀速_速度</div>
<div class="a" style="left:361.0px;top:376.84px;width:7px;height:8px;background:#e4e4e4;border:1px solid #c0c0c0"></div>
<svg class="a" style="left:363.0px;top:379.84px" width="4" height="3"><polygon points="0,0 4,0 2,2.5" fill="#222"/></svg>
<div class="a" style="left:377.5px;top:320.39px;width:51px;height:10px;background:#fff;border:1px solid #d0d0d0"></div>
<div class="t" style="left:379.5px;top:322.39px;font-size:5.5px;color:#333">匀速_速度_位移</div>
<div class="a" style="left:420.5px;top:321.39px;width:7px;height:8px;background:#e4e4e4;border:1px solid #c0c0c0"></div>
<svg class="a" style="left:422.5px;top:324.39px" width="4" height="3"><polygon points="0,0 4,0 2,2.5" fill="#222"/></svg>
<div class="a" style="left:377.5px;top:375.84px;width:51px;height:10px;background:#fff;border:1px solid #d0d0d0"></div>
<div class="t" style="left:379.5px;top:377.84px;font-size:5.5px;color:#333">匀速_速度</div>
<div class="a" style="left:420.5px;top:376.84px;width:7px;height:8px;background:#e4e4e4;border:1px solid #c0c0c0"></div>
<svg class="a" style="left:422.5px;top:379.84px" width="4" height="3"><polygon points="0,0 4,0 2,2.5" fill="#222"/></svg>
<div class="a" style="left:437.0px;top:320.39px;width:51px;height:10px;background:#fff;border:1px solid #d0d0d0"></div>
<div class="t" style="left:439.0px;top:322.39px;font-size:5.5px;color:#333">匀速_速度_位</div>
<div class="a" style="left:480.0px;top:321.39px;width:7px;height:8px;background:#e4e4e4;border:1px solid #c0c0c0"></div>
<svg class="a" style="left:482.0px;top:324.39px" width="4" height="3"><polygon points="0,0 4,0 2,2.5" fill="#222"/></svg>
<div class="a" style="left:437.0px;top:375.84px;width:51px;height:10px;background:#fff;border:1px solid #d0d0d0"></div>
<div class="t" style="left:439.0px;top:377.84px;font-size:5.5px;color:#333">自动加速_续乘</div>
<div class="a" style="left:480.0px;top:376.84px;width:7px;height:8px;background:#e4e4e4;border:1px solid #c0c0c0"></div>
<svg class="a" style="left:482.0px;top:379.84px" width="4" height="3"><polygon points="0,0 4,0 2,2.5" fill="#222"/></svg>
<div class="a" style="left:504.5px;top:320.39px;width:51px;height:10px;background:#fff;border:1px solid #d0d0d0"></div>
<div class="t" style="left:506.5px;top:322.39px;font-size:5.5px;color:#333">自动加速_位移</div>
<div class="a" style="left:547.5px;top:321.39px;width:7px;height:8px;background:#e4e4e4;border:1px solid #c0c0c0"></div>
<svg class="a" style="left:549.5px;top:324.39px" width="4" height="3"><polygon points="0,0 4,0 2,2.5" fill="#222"/></svg>
<div class="a" style="left:504.5px;top:375.84px;width:51px;height:10px;background:#fff;border:1px solid #d0d0d0"></div>
<div class="t" style="left:506.5px;top:377.84px;font-size:5.5px;color:#333">自动加速_位移</div>
<div class="a" style="left:547.5px;top:376.84px;width:7px;height:8px;background:#e4e4e4;border:1px solid #c0c0c0"></div>
<svg class="a" style="left:549.5px;top:379.84px" width="4" height="3"><polygon points="0,0 4,0 2,2.5" fill="#222"/></svg>
<div class="a" style="left:562.5px;top:320.39px;width:51px;height:10px;background:#fff;border:1px solid #d0d0d0"></div>
<div class="t" style="left:564.5px;top:322.39px;font-size:5.5px;color:#333">自动加速_位移</div>
<div class="a" style="left:605.5px;top:321.39px;width:7px;height:8px;background:#e4e4e4;border:1px solid #c0c0c0"></div>
<svg class="a" style="left:607.5px;top:324.39px" width="4" height="3"><polygon points="0,0 4,0 2,2.5" fill="#222"/></svg>
<div class="a" style="left:562.5px;top:375.84px;width:51px;height:10px;background:#fff;border:1px solid #d0d0d0"></div>
<div class="t" style="left:564.5px;top:377.84px;font-size:5.5px;color:#333">自动加速_位移</div>
<div class="a" style="left:605.5px;top:376.84px;width:7px;height:8px;background:#e4e4e4;border:1px solid #c0c0c0"></div>
<svg class="a" style="left:607.5px;top:379.84px" width="4" height="3"><polygon points="0,0 4,0 2,2.5" fill="#222"/></svg>
<div class="a" style="left:620.0px;top:320.39px;width:51px;height:10px;background:#fff;border:1px solid #d0d0d0"></div>
<div class="t" style="left:622.0px;top:322.39px;font-size:5.5px;color:#333">自动加速_位移</div>
<div class="a" style="left:663.0px;top:321.39px;width:7px;height:8px;background:#e4e4e4;border:1px solid #c0c0c0"></div>
<svg class="a" style="left:665.0px;top:324.39px" width="4" height="3"><polygon points="0,0 4,0 2,2.5" fill="#222"/></svg>
<div class="a" style="left:620.0px;top:375.84px;width:51px;height:10px;background:#fff;border:1px solid #d0d0d0"></div>
<div class="t" style="left:622.0px;top:377.84px;font-size:5.5px;color:#333">自动加速_位移</div>
<div class="a" style="left:663.0px;top:376.84px;width:7px;height:8px;background:#e4e4e4;border:1px solid #c0c0c0"></div>
<svg class="a" style="left:665.0px;top:379.84px" width="4" height="3"><polygon points="0,0 4,0 2,2.5" fill="#222"/></svg>
<div class="a" style="left:681.0px;top:320.39px;width:51px;height:10px;background:#fff;border:1px solid #d0d0d0"></div>
<div class="t" style="left:683.0px;top:322.39px;font-size:5.5px;color:#333">自动加速_位移</div>
<div class="a" style="left:724.0px;top:321.39px;width:7px;height:8px;background:#e4e4e4;border:1px solid #c0c0c0"></div>
<svg class="a" style="left:726.0px;top:324.39px" width="4" height="3"><polygon points="0,0 4,0 2,2.5" fill="#222"/></svg>
<div class="a" style="left:681.0px;top:375.84px;width:51px;height:10px;background:#fff;border:1px solid #d0d0d0"></div>
<div class="t" style="left:683.0px;top:377.84px;font-size:5.5px;color:#333">自动加速_位移</div>
<div class="a" style="left:724.0px;top:376.84px;width:7px;height:8px;background:#e4e4e4;border:1px solid #c0c0c0"></div>
<svg class="a" style="left:726.0px;top:379.84px" width="4" height="3"><polygon points="0,0 4,0 2,2.5" fill="#222"/></svg>
<div class="a" style="left:742.5px;top:320.39px;width:51px;height:10px;background:#fff;border:1px solid #d0d0d0"></div>
<div class="t" style="left:744.5px;top:322.39px;font-size:5.5px;color:#333">自动加速_位移</div>
<div class="a" style="left:785.5px;top:321.39px;width:7px;height:8px;background:#e4e4e4;border:1px solid #c0c0c0"></div>
<svg class="a" style="left:787.5px;top:324.39px" width="4" height="3"><polygon points="0,0 4,0 2,2.5" fill="#222"/></svg>
<div class="a" style="left:742.5px;top:375.84px;width:51px;height:10px;background:#fff;border:1px solid #d0d0d0"></div>
<div class="t" style="left:744.5px;top:377.84px;font-size:5.5px;color:#333">自动加速_位移</div>
<div class="a" style="left:785.5px;top:376.84px;width:7px;height:8px;background:#e4e4e4;border:1px solid #c0c0c0"></div>
<svg class="a" style="left:787.5px;top:379.84px" width="4" height="3"><polygon points="0,0 4,0 2,2.5" fill="#222"/></svg></body></html>
